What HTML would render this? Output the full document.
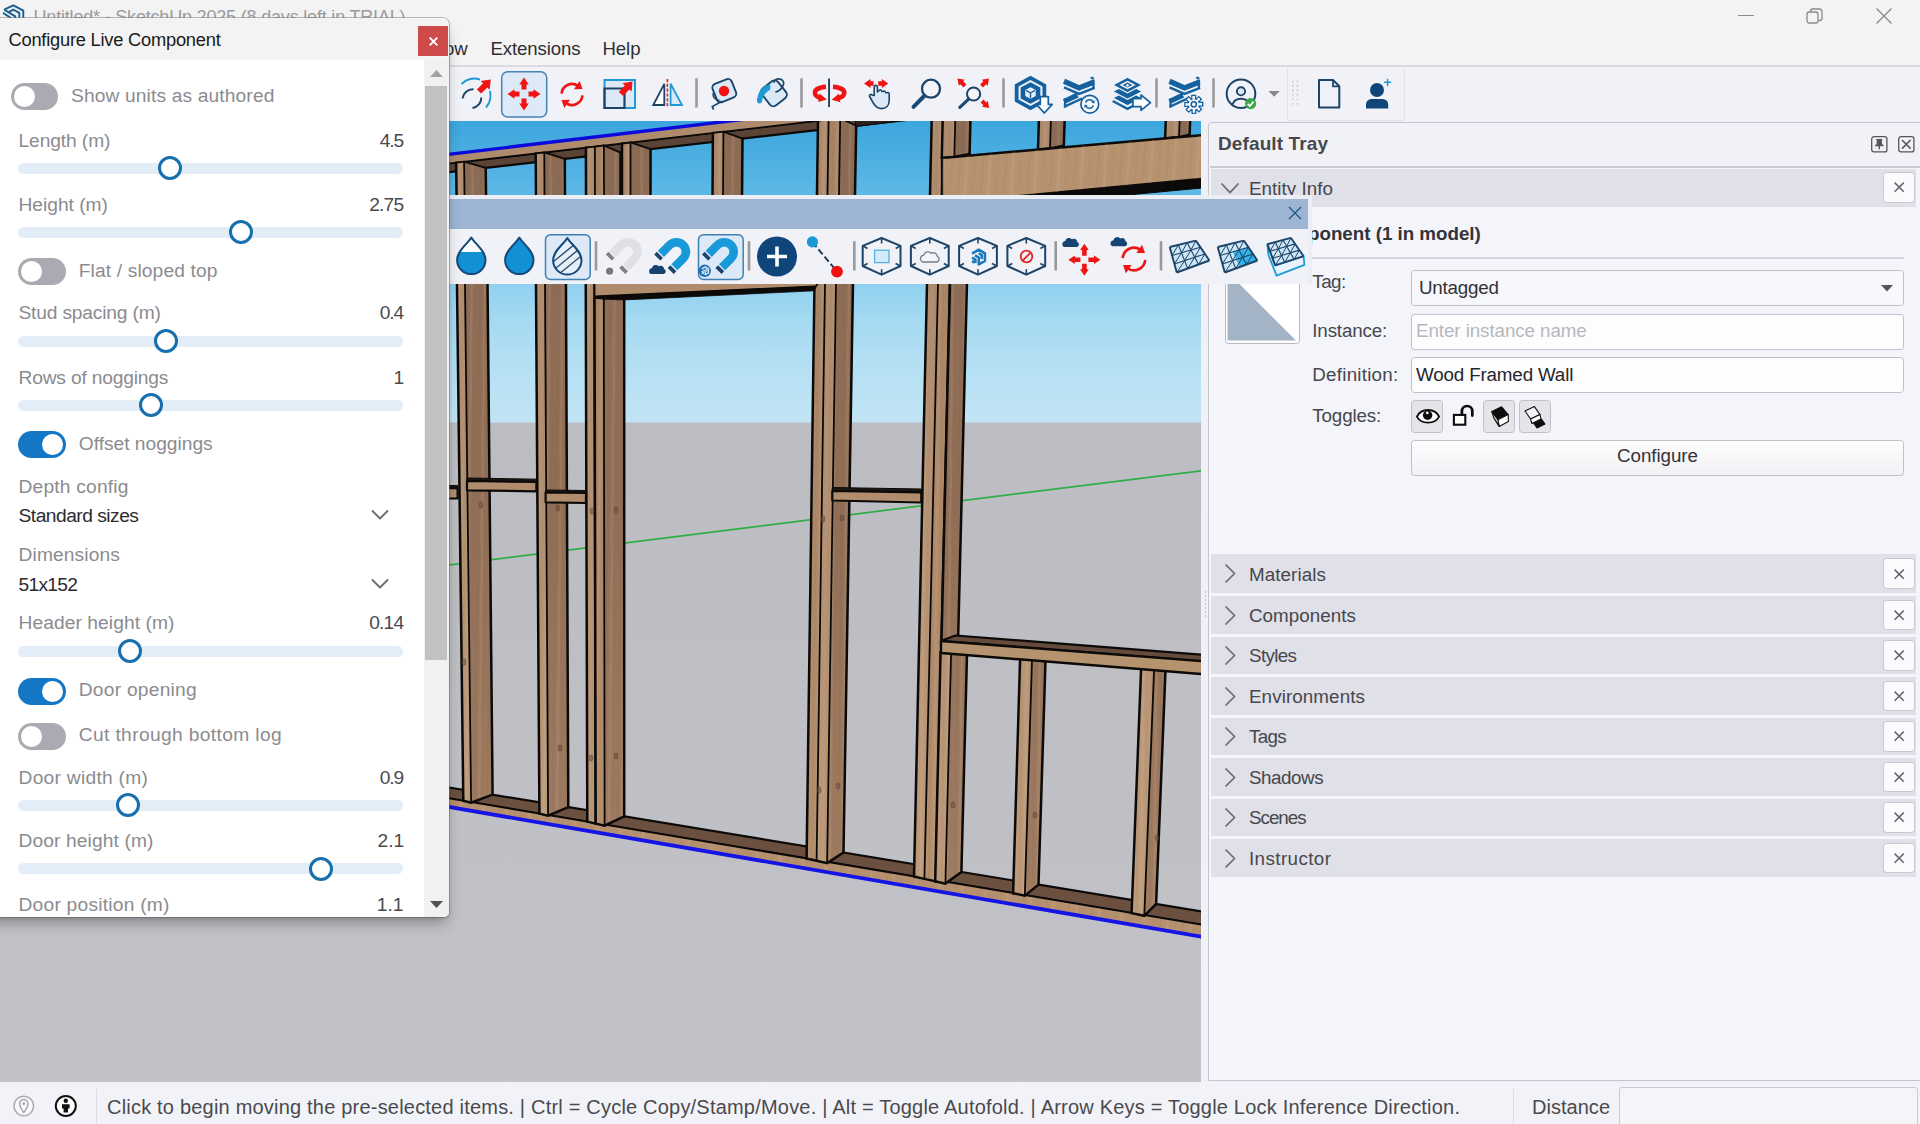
<!DOCTYPE html>
<html><head><meta charset="utf-8"><title>SketchUp</title><style>
html,body{margin:0;padding:0;}
body{width:1920px;height:1124px;overflow:hidden;position:relative;background:#f1f2f7;font-family:"Liberation Sans",sans-serif;}
.t{position:absolute;white-space:pre;font-family:"Liberation Sans",sans-serif;}
#root{position:absolute;left:0;top:0;width:1920px;height:1124px;overflow:hidden;background:#f1f2f7;}
html{overflow:hidden;}
.a{position:absolute;}
svg{position:absolute;overflow:visible;}
</style></head><body>
<div id="root">
<div class="a" style="left:0;top:0;width:1920px;height:66px;background:#f3f3f4"></div>
<svg style="left:0px;top:0px" width="28" height="28" viewBox="0 0 28 28" fill="none" stroke="#1c5f8f" stroke-width="1.9" stroke-linejoin="miter">
      <path d="M4.2 9.6 L13.4 5.4 L23.3 10.6 V19"/>
      <path d="M4.2 9.6 L15.2 16.4 V19"/>
      <path d="M8.6 12.2 L13.3 9.6 L19.3 12.8 V19"/>
      <path d="M3 12.9 L11.4 18.2"/>
    </svg>
<span class="t" style="left:33.50px;top:8.36px;font-size:18px;line-height:18px;color:#9b9b9b;letter-spacing:-0.188px;">Untitled* - SketchUp 2025 (8 days left in TRIAL)</span>
<div class="a" style="left:1738px;top:15px;width:16px;height:1.4px;background:#8a8a8a"></div>
<svg style="left:1806px;top:8px" width="17" height="17" viewBox="0 0 17 17" fill="none" stroke="#8a8a8a" stroke-width="1.3">
      <rect x="1" y="4" width="11" height="11" rx="2.2"/><path d="M4.5 4 V3.2 A2.2 2.2 0 0 1 6.7 1 H13 A3 3 0 0 1 16 4 V10.3 A2.2 2.2 0 0 1 13.8 12.5 H12.2"/></svg>
<svg style="left:1876px;top:8px" width="16" height="16" viewBox="0 0 16 16" fill="none" stroke="#8a8a8a" stroke-width="1.4"><path d="M0.5 0.5 L15.5 15.5 M15.5 0.5 L0.5 15.5"/></svg>

<span class="t" style="left:444.02px;top:39.86px;font-size:18.6px;line-height:18.6px;color:#2f2f33;letter-spacing:0.000px;">ow</span>
<span class="t" style="left:490.50px;top:39.86px;font-size:18.6px;line-height:18.6px;color:#2f2f33;letter-spacing:-0.110px;">Extensions</span>
<span class="t" style="left:602.50px;top:39.86px;font-size:18.6px;line-height:18.6px;color:#2f2f33;letter-spacing:-0.085px;">Help</span>
<div class="a" style="left:0;top:65px;width:1920px;height:1.5px;background:#d9dae2"></div>
<div class="a" style="left:0;top:67px;width:1920px;height:54px;background:#f1f2f7"></div>
<div class="a" style="left:1287px;top:67px;width:1px;height:53px;background:#e2e3ea"></div>
<div class="a" style="left:1404px;top:67px;width:1px;height:53px;background:#e2e3ea"></div>
<div class="a" style="left:1288px;top:120px;width:117px;height:1px;background:#e2e3ea"></div>
<div class="a" style="left:1201px;top:121px;width:719px;height:961px;background:#eff1f7"></div>
<svg style="left:0;top:121px" width="1201" height="961" viewBox="0 121 1201 961">
<defs>
    <linearGradient id="sky" x1="0" y1="121" x2="0" y2="423" gradientUnits="userSpaceOnUse">
      <stop offset="0" stop-color="#3ca6dd"/><stop offset="0.25" stop-color="#5fb9e6"/><stop offset="0.54" stop-color="#90d0ef"/><stop offset="0.65" stop-color="#a3d9f1"/><stop offset="0.76" stop-color="#b0def3"/><stop offset="0.88" stop-color="#bae2f4"/><stop offset="1" stop-color="#c1e4f4"/>
    </linearGradient>
    <linearGradient id="gnd" x1="0" y1="422" x2="0" y2="1082" gradientUnits="userSpaceOnUse">
      <stop offset="0" stop-color="#bcbdc2"/><stop offset="1" stop-color="#c2c3c8"/>
    </linearGradient>
    <pattern id="grainV" width="13" height="90" patternUnits="userSpaceOnUse" patternTransform="rotate(0.6)">
      <path d="M2 0 V90" stroke="#6f5038" stroke-opacity="0.10" stroke-width="1.6"/>
      <path d="M6.5 0 C7.5 30 5.5 60 6.5 90" fill="none" stroke="#e2c4a3" stroke-opacity="0.16" stroke-width="2"/>
      <path d="M10.5 0 V90" stroke="#6f5038" stroke-opacity="0.07" stroke-width="1"/>
    </pattern>
    <pattern id="grainH" width="23" height="60" patternUnits="userSpaceOnUse" patternTransform="rotate(4)">
      <path d="M3 0 V60" stroke="#8a6a4e" stroke-opacity="0.10" stroke-width="2"/>
      <path d="M10 0 V60" stroke="#dcbc9a" stroke-opacity="0.16" stroke-width="3"/>
      <path d="M17.5 0 V60" stroke="#8a6a4e" stroke-opacity="0.07" stroke-width="1.5"/>
    </pattern>
    <linearGradient id="gF1" x1="0" y1="121" x2="0" y2="940" gradientUnits="userSpaceOnUse"><stop offset="0" stop-color="#ae8b6d"/><stop offset="0.5" stop-color="#b59273"/><stop offset="1" stop-color="#bf9c7c"/></linearGradient>
    <linearGradient id="gF2" x1="0" y1="121" x2="0" y2="940" gradientUnits="userSpaceOnUse"><stop offset="0" stop-color="#a88465"/><stop offset="0.5" stop-color="#ad8969"/><stop offset="1" stop-color="#b7926f"/></linearGradient>
    <linearGradient id="gSD" x1="0" y1="121" x2="0" y2="940" gradientUnits="userSpaceOnUse"><stop offset="0" stop-color="#8c6b55"/><stop offset="0.45" stop-color="#906e56"/><stop offset="0.8" stop-color="#9c795e"/><stop offset="1" stop-color="#a17e62"/></linearGradient>
    <clipPath id="vpclip"><rect x="0" y="121" width="1201" height="961"/></clipPath>
    </defs>
<g clip-path="url(#vpclip)">
<rect x="0" y="121" width="1201" height="302" fill="url(#sky)"/>
<rect x="0" y="422.5" width="1201" height="660" fill="url(#gnd)"/>
<polyline points="0.0,621.2 1201.0,470.8" fill="none" stroke="#2fae48" stroke-width="1.7" stroke-linecap="round" />
<polygon points="440.0,164.5 1000.0,99.6 1000.0,109.3 440.0,173.1" fill="#5b4436" stroke="#0b0a09" stroke-width="2.2" stroke-linejoin="round" />
<polygon points="440.0,155.1 900.0,100.5 900.0,111.2 440.0,164.5" fill="url(#gF1)" stroke="none" stroke-width="0" stroke-linejoin="round" />
<polyline points="440.0,164.5 900.0,111.2" fill="none" stroke="#0b0a09" stroke-width="1.6" stroke-linecap="round" />
<polyline points="440.0,155.4 900.0,100.8" fill="none" stroke="#0a0adc" stroke-width="3.4" stroke-linecap="round" />
<polygon points="440.0,786.0 1210.0,912.9 1210.0,926.2 440.0,796.9" fill="#6b5040" stroke="#0b0a09" stroke-width="2.2" stroke-linejoin="round" />
<polygon points="440.0,796.9 1210.0,926.2 1210.0,938.2 440.0,805.4" fill="#b5906f" stroke="none" stroke-width="0" stroke-linejoin="round" />
<polygon points="440.0,796.9 1210.0,926.2 1210.0,938.2 440.0,805.4" fill="url(#grainH)" stroke="none" stroke-width="0" stroke-linejoin="round" />
<polyline points="440.0,796.9 1210.0,926.2" fill="none" stroke="#0b0a09" stroke-width="1.8" stroke-linecap="round" />
<polyline points="440.0,805.4 1210.0,938.2" fill="none" stroke="#1414e6" stroke-width="3.8" stroke-linecap="round" />
<polygon points="456.1,162.7 464.1,161.7 464.6,200.0 456.6,200.0" fill="url(#gF1)" stroke="none" stroke-width="0" stroke-linejoin="round" />
<polygon points="456.1,162.7 464.1,161.7 464.6,200.0 456.6,200.0" fill="url(#grainV)" stroke="none" stroke-width="0" stroke-linejoin="round" />
<polygon points="464.1,161.7 485.7,167.9 486.1,200.0 464.6,200.0" fill="url(#gSD)" stroke="none" stroke-width="0" stroke-linejoin="round" />
<polygon points="464.1,161.7 485.7,167.9 486.1,200.0 464.6,200.0" fill="url(#grainV)" stroke="none" stroke-width="0" stroke-linejoin="round" />
<polyline points="464.1,161.7 464.6,200.0" fill="none" stroke="#0b0a09" stroke-width="1.8" stroke-linecap="round" />
<polyline points="456.1,162.7 456.6,200.0" fill="none" stroke="#0b0a09" stroke-width="2.5" stroke-linecap="round" />
<polyline points="485.7,167.9 486.1,200.0" fill="none" stroke="#0b0a09" stroke-width="2.5" stroke-linecap="round" />
<polyline points="456.6,200.0 464.6,200.0 486.1,200.0" fill="none" stroke="#0b0a09" stroke-width="2.5" stroke-linecap="round" />
<polyline points="456.1,162.7 464.1,161.7 485.7,167.9" fill="none" stroke="#0b0a09" stroke-width="1.8" stroke-linecap="round" />
<polygon points="535.7,153.4 544.3,152.5 544.5,200.0 536.0,200.0" fill="url(#gF1)" stroke="none" stroke-width="0" stroke-linejoin="round" />
<polygon points="535.7,153.4 544.3,152.5 544.5,200.0 536.0,200.0" fill="url(#grainV)" stroke="none" stroke-width="0" stroke-linejoin="round" />
<polygon points="544.3,152.5 564.8,158.9 565.0,200.0 544.5,200.0" fill="url(#gSD)" stroke="none" stroke-width="0" stroke-linejoin="round" />
<polygon points="544.3,152.5 564.8,158.9 565.0,200.0 544.5,200.0" fill="url(#grainV)" stroke="none" stroke-width="0" stroke-linejoin="round" />
<polyline points="544.3,152.5 544.5,200.0" fill="none" stroke="#0b0a09" stroke-width="1.8" stroke-linecap="round" />
<polyline points="535.7,153.4 536.0,200.0" fill="none" stroke="#0b0a09" stroke-width="2.5" stroke-linecap="round" />
<polyline points="564.8,158.9 565.0,200.0" fill="none" stroke="#0b0a09" stroke-width="2.5" stroke-linecap="round" />
<polyline points="536.0,200.0 544.5,200.0 565.0,200.0" fill="none" stroke="#0b0a09" stroke-width="2.5" stroke-linecap="round" />
<polyline points="535.7,153.4 544.3,152.5 564.8,158.9" fill="none" stroke="#0b0a09" stroke-width="1.8" stroke-linecap="round" />
<polygon points="585.9,147.6 594.9,146.6 595.0,200.0 586.0,200.0" fill="url(#gF1)" stroke="none" stroke-width="0" stroke-linejoin="round" />
<polygon points="585.9,147.6 594.9,146.6 595.0,200.0 586.0,200.0" fill="url(#grainV)" stroke="none" stroke-width="0" stroke-linejoin="round" />
<polygon points="594.9,146.6 603.9,145.5 604.0,200.0 595.0,200.0" fill="url(#gF2)" stroke="none" stroke-width="0" stroke-linejoin="round" />
<polygon points="594.9,146.6 603.9,145.5 604.0,200.0 595.0,200.0" fill="url(#grainV)" stroke="none" stroke-width="0" stroke-linejoin="round" />
<polygon points="603.9,145.5 620.5,152.6 620.5,200.0 604.0,200.0" fill="url(#gSD)" stroke="none" stroke-width="0" stroke-linejoin="round" />
<polygon points="603.9,145.5 620.5,152.6 620.5,200.0 604.0,200.0" fill="url(#grainV)" stroke="none" stroke-width="0" stroke-linejoin="round" />
<polyline points="594.9,146.6 595.0,200.0" fill="none" stroke="#0b0a09" stroke-width="1.8" stroke-linecap="round" />
<polyline points="603.9,145.5 604.0,200.0" fill="none" stroke="#0b0a09" stroke-width="1.8" stroke-linecap="round" />
<polyline points="585.9,147.6 586.0,200.0" fill="none" stroke="#0b0a09" stroke-width="2.5" stroke-linecap="round" />
<polyline points="620.5,152.6 620.5,200.0" fill="none" stroke="#0b0a09" stroke-width="2.5" stroke-linecap="round" />
<polyline points="586.0,200.0 595.0,200.0 604.0,200.0 620.5,200.0" fill="none" stroke="#0b0a09" stroke-width="2.5" stroke-linecap="round" />
<polyline points="585.9,147.6 594.9,146.6 603.9,145.5 620.5,152.6" fill="none" stroke="#0b0a09" stroke-width="1.8" stroke-linecap="round" />
<polygon points="622.0,143.5 630.5,142.5 630.5,200.0 622.0,200.0" fill="url(#gF1)" stroke="none" stroke-width="0" stroke-linejoin="round" />
<polygon points="622.0,143.5 630.5,142.5 630.5,200.0 622.0,200.0" fill="url(#grainV)" stroke="none" stroke-width="0" stroke-linejoin="round" />
<polygon points="630.5,142.5 650.6,149.1 650.5,200.0 630.5,200.0" fill="url(#gSD)" stroke="none" stroke-width="0" stroke-linejoin="round" />
<polygon points="630.5,142.5 650.6,149.1 650.5,200.0 630.5,200.0" fill="url(#grainV)" stroke="none" stroke-width="0" stroke-linejoin="round" />
<polyline points="630.5,142.5 630.5,200.0" fill="none" stroke="#0b0a09" stroke-width="1.8" stroke-linecap="round" />
<polyline points="622.0,143.5 622.0,200.0" fill="none" stroke="#0b0a09" stroke-width="2.5" stroke-linecap="round" />
<polyline points="650.6,149.1 650.5,200.0" fill="none" stroke="#0b0a09" stroke-width="2.5" stroke-linecap="round" />
<polyline points="622.0,200.0 630.5,200.0 650.5,200.0" fill="none" stroke="#0b0a09" stroke-width="2.5" stroke-linecap="round" />
<polyline points="622.0,143.5 630.5,142.5 650.6,149.1" fill="none" stroke="#0b0a09" stroke-width="1.8" stroke-linecap="round" />
<polygon points="712.9,132.9 723.4,131.7 723.0,200.0 712.5,200.0" fill="url(#gF1)" stroke="none" stroke-width="0" stroke-linejoin="round" />
<polygon points="712.9,132.9 723.4,131.7 723.0,200.0 712.5,200.0" fill="url(#grainV)" stroke="none" stroke-width="0" stroke-linejoin="round" />
<polygon points="723.4,131.7 742.5,138.7 742.0,200.0 723.0,200.0" fill="url(#gSD)" stroke="none" stroke-width="0" stroke-linejoin="round" />
<polygon points="723.4,131.7 742.5,138.7 742.0,200.0 723.0,200.0" fill="url(#grainV)" stroke="none" stroke-width="0" stroke-linejoin="round" />
<polyline points="723.4,131.7 723.0,200.0" fill="none" stroke="#0b0a09" stroke-width="1.8" stroke-linecap="round" />
<polyline points="712.9,132.9 712.5,200.0" fill="none" stroke="#0b0a09" stroke-width="2.5" stroke-linecap="round" />
<polyline points="742.5,138.7 742.0,200.0" fill="none" stroke="#0b0a09" stroke-width="2.5" stroke-linecap="round" />
<polyline points="712.5,200.0 723.0,200.0 742.0,200.0" fill="none" stroke="#0b0a09" stroke-width="2.5" stroke-linecap="round" />
<polyline points="712.9,132.9 723.4,131.7 742.5,138.7" fill="none" stroke="#0b0a09" stroke-width="1.8" stroke-linecap="round" />
<polygon points="818.0,120.7 828.6,119.5 827.4,200.0 816.9,200.0" fill="url(#gF1)" stroke="none" stroke-width="0" stroke-linejoin="round" />
<polygon points="818.0,120.7 828.6,119.5 827.4,200.0 816.9,200.0" fill="url(#grainV)" stroke="none" stroke-width="0" stroke-linejoin="round" />
<polygon points="828.6,119.5 840.2,118.2 838.9,200.0 827.4,200.0" fill="url(#gF2)" stroke="none" stroke-width="0" stroke-linejoin="round" />
<polygon points="828.6,119.5 840.2,118.2 838.9,200.0 827.4,200.0" fill="url(#grainV)" stroke="none" stroke-width="0" stroke-linejoin="round" />
<polygon points="840.2,118.2 856.2,125.7 854.9,200.0 838.9,200.0" fill="url(#gSD)" stroke="none" stroke-width="0" stroke-linejoin="round" />
<polygon points="840.2,118.2 856.2,125.7 854.9,200.0 838.9,200.0" fill="url(#grainV)" stroke="none" stroke-width="0" stroke-linejoin="round" />
<polyline points="828.6,119.5 827.4,200.0" fill="none" stroke="#0b0a09" stroke-width="1.8" stroke-linecap="round" />
<polyline points="840.2,118.2 838.9,200.0" fill="none" stroke="#0b0a09" stroke-width="1.8" stroke-linecap="round" />
<polyline points="818.0,120.7 816.9,200.0" fill="none" stroke="#0b0a09" stroke-width="2.5" stroke-linecap="round" />
<polyline points="856.2,125.7 854.9,200.0" fill="none" stroke="#0b0a09" stroke-width="2.5" stroke-linecap="round" />
<polyline points="816.9,200.0 827.4,200.0 838.9,200.0 854.9,200.0" fill="none" stroke="#0b0a09" stroke-width="2.5" stroke-linecap="round" />
<polyline points="818.0,120.7 828.6,119.5 840.2,118.2 856.2,125.7" fill="none" stroke="#0b0a09" stroke-width="1.8" stroke-linecap="round" />
<polygon points="931.9,110.0 944.0,110.0 941.9,200.0 929.9,200.0" fill="url(#gF1)" stroke="none" stroke-width="0" stroke-linejoin="round" />
<polygon points="931.9,110.0 944.0,110.0 941.9,200.0 929.9,200.0" fill="url(#grainV)" stroke="none" stroke-width="0" stroke-linejoin="round" />
<polyline points="931.9,110.0 929.9,200.0" fill="none" stroke="#0b0a09" stroke-width="2.5" stroke-linecap="round" />
<polyline points="944.0,110.0 941.9,200.0" fill="none" stroke="#0b0a09" stroke-width="2.5" stroke-linecap="round" />
<polyline points="929.9,200.0 941.9,200.0" fill="none" stroke="#0b0a09" stroke-width="2.5" stroke-linecap="round" />
<polyline points="931.9,110.0 944.0,110.0" fill="none" stroke="#0b0a09" stroke-width="1.8" stroke-linecap="round" />
<polygon points="942.9,110.0 955.5,110.0 954.3,156.9 941.8,158.0" fill="url(#gF1)" stroke="none" stroke-width="0" stroke-linejoin="round" />
<polygon points="942.9,110.0 955.5,110.0 954.3,156.9 941.8,158.0" fill="url(#grainV)" stroke="none" stroke-width="0" stroke-linejoin="round" />
<polygon points="955.5,110.0 970.7,110.0 969.6,154.1 954.3,156.9" fill="url(#gSD)" stroke="none" stroke-width="0" stroke-linejoin="round" />
<polygon points="955.5,110.0 970.7,110.0 969.6,154.1 954.3,156.9" fill="url(#grainV)" stroke="none" stroke-width="0" stroke-linejoin="round" />
<polyline points="955.5,110.0 954.3,156.9" fill="none" stroke="#0b0a09" stroke-width="1.8" stroke-linecap="round" />
<polyline points="942.9,110.0 941.8,158.0" fill="none" stroke="#0b0a09" stroke-width="2.5" stroke-linecap="round" />
<polyline points="970.7,110.0 969.6,154.1" fill="none" stroke="#0b0a09" stroke-width="2.5" stroke-linecap="round" />
<polyline points="941.8,158.0 954.3,156.9 969.6,154.1" fill="none" stroke="#0b0a09" stroke-width="2.5" stroke-linecap="round" />
<polyline points="942.9,110.0 955.5,110.0 970.7,110.0" fill="none" stroke="#0b0a09" stroke-width="1.8" stroke-linecap="round" />
<polygon points="1039.2,110.0 1051.2,110.0 1050.0,148.5 1038.0,149.6" fill="url(#gF1)" stroke="none" stroke-width="0" stroke-linejoin="round" />
<polygon points="1039.2,110.0 1051.2,110.0 1050.0,148.5 1038.0,149.6" fill="url(#grainV)" stroke="none" stroke-width="0" stroke-linejoin="round" />
<polygon points="1051.2,110.0 1065.0,110.0 1063.8,145.8 1050.0,148.5" fill="url(#gSD)" stroke="none" stroke-width="0" stroke-linejoin="round" />
<polygon points="1051.2,110.0 1065.0,110.0 1063.8,145.8 1050.0,148.5" fill="url(#grainV)" stroke="none" stroke-width="0" stroke-linejoin="round" />
<polyline points="1051.2,110.0 1050.0,148.5" fill="none" stroke="#0b0a09" stroke-width="1.8" stroke-linecap="round" />
<polyline points="1039.2,110.0 1038.0,149.6" fill="none" stroke="#0b0a09" stroke-width="2.5" stroke-linecap="round" />
<polyline points="1065.0,110.0 1063.8,145.8" fill="none" stroke="#0b0a09" stroke-width="2.5" stroke-linecap="round" />
<polyline points="1038.0,149.6 1050.0,148.5 1063.8,145.8" fill="none" stroke="#0b0a09" stroke-width="2.5" stroke-linecap="round" />
<polyline points="1039.2,110.0 1051.2,110.0 1065.0,110.0" fill="none" stroke="#0b0a09" stroke-width="1.8" stroke-linecap="round" />
<polygon points="1166.2,110.0 1180.1,110.0 1179.0,137.1 1165.1,138.4" fill="url(#gF1)" stroke="none" stroke-width="0" stroke-linejoin="round" />
<polygon points="1166.2,110.0 1180.1,110.0 1179.0,137.1 1165.1,138.4" fill="url(#grainV)" stroke="none" stroke-width="0" stroke-linejoin="round" />
<polygon points="1180.1,110.0 1190.6,110.0 1189.6,134.7 1179.0,137.1" fill="url(#gSD)" stroke="none" stroke-width="0" stroke-linejoin="round" />
<polygon points="1180.1,110.0 1190.6,110.0 1189.6,134.7 1179.0,137.1" fill="url(#grainV)" stroke="none" stroke-width="0" stroke-linejoin="round" />
<polyline points="1180.1,110.0 1179.0,137.1" fill="none" stroke="#0b0a09" stroke-width="1.8" stroke-linecap="round" />
<polyline points="1166.2,110.0 1165.1,138.4" fill="none" stroke="#0b0a09" stroke-width="2.5" stroke-linecap="round" />
<polyline points="1190.6,110.0 1189.6,134.7" fill="none" stroke="#0b0a09" stroke-width="2.5" stroke-linecap="round" />
<polyline points="1165.1,138.4 1179.0,137.1 1189.6,134.7" fill="none" stroke="#0b0a09" stroke-width="2.5" stroke-linecap="round" />
<polyline points="1166.2,110.0 1180.1,110.0 1190.6,110.0" fill="none" stroke="#0b0a09" stroke-width="1.8" stroke-linecap="round" />
<polygon points="942.0,158.0 1210.0,134.4 1210.0,178.0 994.0,198.5 942.0,200.0" fill="#b6926f" stroke="#0b0a09" stroke-width="2.4" stroke-linejoin="round" />
<polygon points="942.0,158.0 1210.0,134.4 1210.0,178.0 994.0,198.5 942.0,200.0" fill="url(#grainH)" stroke="none" stroke-width="0" stroke-linejoin="round" />
<polygon points="1210.0,178.2 1210.0,187.2 1117.0,196.0 1010.0,197.0" fill="#0b0a09" stroke="#0b0a09" stroke-width="1" stroke-linejoin="round" />
<polygon points="855.0,120.0 906.0,120.0 856.0,126.5" fill="#2a1f19" stroke="#0b0a09" stroke-width="1.2" stroke-linejoin="round" />
<polygon points="456.8,270.0 464.8,270.0 471.1,802.7 463.3,800.8" fill="url(#gF1)" stroke="none" stroke-width="0" stroke-linejoin="round" />
<polygon points="456.8,270.0 464.8,270.0 471.1,802.7 463.3,800.8" fill="url(#grainV)" stroke="none" stroke-width="0" stroke-linejoin="round" />
<polygon points="464.8,270.0 487.4,270.0 492.6,794.7 471.1,802.7" fill="url(#gSD)" stroke="none" stroke-width="0" stroke-linejoin="round" />
<polygon points="464.8,270.0 487.4,270.0 492.6,794.7 471.1,802.7" fill="url(#grainV)" stroke="none" stroke-width="0" stroke-linejoin="round" />
<polyline points="464.8,270.0 471.1,802.7" fill="none" stroke="#0b0a09" stroke-width="1.8" stroke-linecap="round" />
<polyline points="456.8,270.0 463.3,800.8" fill="none" stroke="#0b0a09" stroke-width="2.5" stroke-linecap="round" />
<polyline points="487.4,270.0 492.6,794.7" fill="none" stroke="#0b0a09" stroke-width="2.5" stroke-linecap="round" />
<polyline points="463.3,800.8 471.1,802.7 492.6,794.7" fill="none" stroke="#0b0a09" stroke-width="2.5" stroke-linecap="round" />
<polyline points="456.8,270.0 464.8,270.0 487.4,270.0" fill="none" stroke="#0b0a09" stroke-width="1.8" stroke-linecap="round" />
<polygon points="535.9,270.0 544.9,270.0 548.1,815.6 539.4,813.6" fill="url(#gF1)" stroke="none" stroke-width="0" stroke-linejoin="round" />
<polygon points="535.9,270.0 544.9,270.0 548.1,815.6 539.4,813.6" fill="url(#grainV)" stroke="none" stroke-width="0" stroke-linejoin="round" />
<polygon points="544.9,270.0 565.9,270.0 568.3,807.2 548.1,815.6" fill="url(#gSD)" stroke="none" stroke-width="0" stroke-linejoin="round" />
<polygon points="544.9,270.0 565.9,270.0 568.3,807.2 548.1,815.6" fill="url(#grainV)" stroke="none" stroke-width="0" stroke-linejoin="round" />
<polyline points="544.9,270.0 548.1,815.6" fill="none" stroke="#0b0a09" stroke-width="1.8" stroke-linecap="round" />
<polyline points="535.9,270.0 539.4,813.6" fill="none" stroke="#0b0a09" stroke-width="2.5" stroke-linecap="round" />
<polyline points="565.9,270.0 568.3,807.2" fill="none" stroke="#0b0a09" stroke-width="2.5" stroke-linecap="round" />
<polyline points="539.4,813.6 548.1,815.6 568.3,807.2" fill="none" stroke="#0b0a09" stroke-width="2.5" stroke-linecap="round" />
<polyline points="535.9,270.0 544.9,270.0 565.9,270.0" fill="none" stroke="#0b0a09" stroke-width="1.8" stroke-linecap="round" />
<polygon points="585.7,270.0 594.5,270.0 595.7,823.6 587.3,821.6" fill="url(#gF1)" stroke="none" stroke-width="0" stroke-linejoin="round" />
<polygon points="585.7,270.0 594.5,270.0 595.7,823.6 587.3,821.6" fill="url(#grainV)" stroke="none" stroke-width="0" stroke-linejoin="round" />
<polyline points="585.7,270.0 587.3,821.6" fill="none" stroke="#0b0a09" stroke-width="2.5" stroke-linecap="round" />
<polyline points="594.5,270.0 595.7,823.6" fill="none" stroke="#0b0a09" stroke-width="2.5" stroke-linecap="round" />
<polyline points="587.3,821.6 595.7,823.6" fill="none" stroke="#0b0a09" stroke-width="2.5" stroke-linecap="round" />
<polyline points="585.7,270.0 594.5,270.0" fill="none" stroke="#0b0a09" stroke-width="1.8" stroke-linecap="round" />
<polygon points="594.5,298.2 603.8,298.2 604.6,825.7 595.7,823.6" fill="url(#gF2)" stroke="none" stroke-width="0" stroke-linejoin="round" />
<polygon points="594.5,298.2 603.8,298.2 604.6,825.7 595.7,823.6" fill="url(#grainV)" stroke="none" stroke-width="0" stroke-linejoin="round" />
<polygon points="603.8,298.2 624.2,298.2 624.2,816.4 604.6,825.7" fill="url(#gSD)" stroke="none" stroke-width="0" stroke-linejoin="round" />
<polygon points="603.8,298.2 624.2,298.2 624.2,816.4 604.6,825.7" fill="url(#grainV)" stroke="none" stroke-width="0" stroke-linejoin="round" />
<polyline points="603.8,298.2 604.6,825.7" fill="none" stroke="#0b0a09" stroke-width="1.8" stroke-linecap="round" />
<polyline points="594.5,298.2 595.7,823.6" fill="none" stroke="#0b0a09" stroke-width="2.5" stroke-linecap="round" />
<polyline points="624.2,298.2 624.2,816.4" fill="none" stroke="#0b0a09" stroke-width="2.5" stroke-linecap="round" />
<polyline points="595.7,823.6 604.6,825.7 624.2,816.4" fill="none" stroke="#0b0a09" stroke-width="2.5" stroke-linecap="round" />
<polyline points="594.5,298.2 603.8,298.2 624.2,298.2" fill="none" stroke="#0b0a09" stroke-width="1.8" stroke-linecap="round" />
<polygon points="594.5,270.0 826.0,270.0 826.0,286.0 594.5,296.3" fill="#b08c6c" stroke="#0b0a09" stroke-width="1.8" stroke-linejoin="round" />
<polygon points="596.5,296.6 814.5,286.6 814.5,290.8 624.5,299.9 604.0,299.2 596.5,298.4" fill="#0b0a09" stroke="#0b0a09" stroke-width="0.8" stroke-linejoin="round" />
<polygon points="814.4,289.0 825.2,270.0 816.6,860.8 806.6,858.5" fill="url(#gF2)" stroke="none" stroke-width="0" stroke-linejoin="round" />
<polygon points="814.4,289.0 825.2,270.0 816.6,860.8 806.6,858.5" fill="url(#grainV)" stroke="none" stroke-width="0" stroke-linejoin="round" />
<polygon points="825.2,270.0 836.2,270.0 827.1,863.1 816.6,860.8" fill="url(#gF1)" stroke="none" stroke-width="0" stroke-linejoin="round" />
<polygon points="825.2,270.0 836.2,270.0 827.1,863.1 816.6,860.8" fill="url(#grainV)" stroke="none" stroke-width="0" stroke-linejoin="round" />
<polygon points="836.2,270.0 853.2,270.0 843.5,852.5 827.1,863.1" fill="url(#gSD)" stroke="none" stroke-width="0" stroke-linejoin="round" />
<polygon points="836.2,270.0 853.2,270.0 843.5,852.5 827.1,863.1" fill="url(#grainV)" stroke="none" stroke-width="0" stroke-linejoin="round" />
<polyline points="825.2,270.0 816.6,860.8" fill="none" stroke="#0b0a09" stroke-width="1.8" stroke-linecap="round" />
<polyline points="836.2,270.0 827.1,863.1" fill="none" stroke="#0b0a09" stroke-width="1.8" stroke-linecap="round" />
<polyline points="814.4,289.0 806.6,858.5" fill="none" stroke="#0b0a09" stroke-width="2.5" stroke-linecap="round" />
<polyline points="853.2,270.0 843.5,852.5" fill="none" stroke="#0b0a09" stroke-width="2.5" stroke-linecap="round" />
<polyline points="806.6,858.5 816.6,860.8 827.1,863.1 843.5,852.5" fill="none" stroke="#0b0a09" stroke-width="2.5" stroke-linecap="round" />
<polyline points="814.4,289.0 825.2,270.0 836.2,270.0 853.2,270.0" fill="none" stroke="#0b0a09" stroke-width="1.8" stroke-linecap="round" />
<polygon points="927.3,270.0 938.3,270.0 924.4,878.9 914.0,876.5" fill="url(#gF1)" stroke="none" stroke-width="0" stroke-linejoin="round" />
<polygon points="927.3,270.0 938.3,270.0 924.4,878.9 914.0,876.5" fill="url(#grainV)" stroke="none" stroke-width="0" stroke-linejoin="round" />
<polygon points="938.3,270.0 950.3,270.0 935.8,881.4 924.4,878.9" fill="url(#gF2)" stroke="none" stroke-width="0" stroke-linejoin="round" />
<polygon points="938.3,270.0 950.3,270.0 935.8,881.4 924.4,878.9" fill="url(#grainV)" stroke="none" stroke-width="0" stroke-linejoin="round" />
<polyline points="938.3,270.0 924.4,878.9" fill="none" stroke="#0b0a09" stroke-width="1.8" stroke-linecap="round" />
<polyline points="927.3,270.0 914.0,876.5" fill="none" stroke="#0b0a09" stroke-width="2.5" stroke-linecap="round" />
<polyline points="950.3,270.0 935.8,881.4" fill="none" stroke="#0b0a09" stroke-width="2.5" stroke-linecap="round" />
<polyline points="914.0,876.5 924.4,878.9 935.8,881.4" fill="none" stroke="#0b0a09" stroke-width="2.5" stroke-linecap="round" />
<polyline points="927.3,270.0 938.3,270.0 950.3,270.0" fill="none" stroke="#0b0a09" stroke-width="1.8" stroke-linecap="round" />
<polygon points="950.3,270.0 967.3,270.0 958.2,636.0 941.5,641.0" fill="url(#gSD)" stroke="none" stroke-width="0" stroke-linejoin="round" />
<polygon points="950.3,270.0 967.3,270.0 958.2,636.0 941.5,641.0" fill="url(#grainV)" stroke="none" stroke-width="0" stroke-linejoin="round" />
<polyline points="950.3,270.0 941.5,641.0" fill="none" stroke="#0b0a09" stroke-width="2.5" stroke-linecap="round" />
<polyline points="967.3,270.0 958.2,636.0" fill="none" stroke="#0b0a09" stroke-width="2.5" stroke-linecap="round" />
<polyline points="941.5,641.0 958.2,636.0" fill="none" stroke="#0b0a09" stroke-width="2.5" stroke-linecap="round" />
<polyline points="950.3,270.0 967.3,270.0" fill="none" stroke="#0b0a09" stroke-width="1.8" stroke-linecap="round" />
<polygon points="940.6,652.0 951.1,652.8 945.4,883.6 935.2,881.3" fill="url(#gF1)" stroke="none" stroke-width="0" stroke-linejoin="round" />
<polygon points="940.6,652.0 951.1,652.8 945.4,883.6 935.2,881.3" fill="url(#grainV)" stroke="none" stroke-width="0" stroke-linejoin="round" />
<polygon points="951.1,652.8 967.0,654.1 961.4,871.9 945.4,883.6" fill="url(#gSD)" stroke="none" stroke-width="0" stroke-linejoin="round" />
<polygon points="951.1,652.8 967.0,654.1 961.4,871.9 945.4,883.6" fill="url(#grainV)" stroke="none" stroke-width="0" stroke-linejoin="round" />
<polyline points="951.1,652.8 945.4,883.6" fill="none" stroke="#0b0a09" stroke-width="1.8" stroke-linecap="round" />
<polyline points="940.6,652.0 935.2,881.3" fill="none" stroke="#0b0a09" stroke-width="2.5" stroke-linecap="round" />
<polyline points="967.0,654.1 961.4,871.9" fill="none" stroke="#0b0a09" stroke-width="2.5" stroke-linecap="round" />
<polyline points="935.2,881.3 945.4,883.6 961.4,871.9" fill="none" stroke="#0b0a09" stroke-width="2.5" stroke-linecap="round" />
<polyline points="940.6,652.0 951.1,652.8 967.0,654.1" fill="none" stroke="#0b0a09" stroke-width="1.8" stroke-linecap="round" />
<polygon points="1020.1,658.4 1032.0,659.4 1024.8,895.7 1013.1,893.2" fill="url(#gF1)" stroke="none" stroke-width="0" stroke-linejoin="round" />
<polygon points="1020.1,658.4 1032.0,659.4 1024.8,895.7 1013.1,893.2" fill="url(#grainV)" stroke="none" stroke-width="0" stroke-linejoin="round" />
<polygon points="1032.0,659.4 1045.5,660.5 1038.5,884.6 1024.8,895.7" fill="url(#gSD)" stroke="none" stroke-width="0" stroke-linejoin="round" />
<polygon points="1032.0,659.4 1045.5,660.5 1038.5,884.6 1024.8,895.7" fill="url(#grainV)" stroke="none" stroke-width="0" stroke-linejoin="round" />
<polyline points="1032.0,659.4 1024.8,895.7" fill="none" stroke="#0b0a09" stroke-width="1.8" stroke-linecap="round" />
<polyline points="1020.1,658.4 1013.1,893.2" fill="none" stroke="#0b0a09" stroke-width="2.5" stroke-linecap="round" />
<polyline points="1045.5,660.5 1038.5,884.6" fill="none" stroke="#0b0a09" stroke-width="2.5" stroke-linecap="round" />
<polyline points="1013.1,893.2 1024.8,895.7 1038.5,884.6" fill="none" stroke="#0b0a09" stroke-width="2.5" stroke-linecap="round" />
<polyline points="1020.1,658.4 1032.0,659.4 1045.5,660.5" fill="none" stroke="#0b0a09" stroke-width="1.8" stroke-linecap="round" />
<polygon points="1141.1,668.2 1154.1,669.3 1144.3,915.8 1131.6,913.1" fill="url(#gF1)" stroke="none" stroke-width="0" stroke-linejoin="round" />
<polygon points="1141.1,668.2 1154.1,669.3 1144.3,915.8 1131.6,913.1" fill="url(#grainV)" stroke="none" stroke-width="0" stroke-linejoin="round" />
<polygon points="1154.1,669.3 1165.5,670.2 1156.1,904.0 1144.3,915.8" fill="url(#gSD)" stroke="none" stroke-width="0" stroke-linejoin="round" />
<polygon points="1154.1,669.3 1165.5,670.2 1156.1,904.0 1144.3,915.8" fill="url(#grainV)" stroke="none" stroke-width="0" stroke-linejoin="round" />
<polyline points="1154.1,669.3 1144.3,915.8" fill="none" stroke="#0b0a09" stroke-width="1.8" stroke-linecap="round" />
<polyline points="1141.1,668.2 1131.6,913.1" fill="none" stroke="#0b0a09" stroke-width="2.5" stroke-linecap="round" />
<polyline points="1165.5,670.2 1156.1,904.0" fill="none" stroke="#0b0a09" stroke-width="2.5" stroke-linecap="round" />
<polyline points="1131.6,913.1 1144.3,915.8 1156.1,904.0" fill="none" stroke="#0b0a09" stroke-width="2.5" stroke-linecap="round" />
<polyline points="1141.1,668.2 1154.1,669.3 1165.5,670.2" fill="none" stroke="#0b0a09" stroke-width="1.8" stroke-linecap="round" />
<polygon points="941.0,641.0 955.5,635.5 1210.0,655.3 1210.0,661.8" fill="#654b3c" stroke="#0b0a09" stroke-width="2.2" stroke-linejoin="round" />
<polygon points="941.0,641.0 1210.0,661.8 1210.0,674.8 941.0,653.0" fill="#b6936f" stroke="#0b0a09" stroke-width="2.4" stroke-linejoin="round" />
<polygon points="440.0,485.5 457.6,485.5 457.6,488.2 440.0,488.2" fill="#1d1713" stroke="#0b0a09" stroke-width="1" stroke-linejoin="round" />
<polygon points="440.0,488.2 457.6,488.2 457.6,498.5 440.0,498.5" fill="#b18d6e" stroke="#0b0a09" stroke-width="2.2" stroke-linejoin="round" />
<polygon points="467.0,478.0 536.4,479.2 536.4,482.0 467.0,481.0" fill="#1d1713" stroke="#0b0a09" stroke-width="1" stroke-linejoin="round" />
<polygon points="467.0,481.0 536.4,482.0 536.4,491.3 467.0,490.3" fill="#b18d6e" stroke="#0b0a09" stroke-width="2.2" stroke-linejoin="round" />
<polygon points="545.6,490.0 586.0,490.5 586.0,493.0 545.6,492.5" fill="#1d1713" stroke="#0b0a09" stroke-width="1" stroke-linejoin="round" />
<polygon points="545.6,492.5 586.0,493.0 586.0,503.0 545.6,502.3" fill="#b18d6e" stroke="#0b0a09" stroke-width="2.2" stroke-linejoin="round" />
<polygon points="832.3,487.5 921.3,489.0 921.3,492.3 832.3,491.0" fill="#1d1713" stroke="#0b0a09" stroke-width="1" stroke-linejoin="round" />
<polygon points="832.3,491.0 921.3,492.3 921.3,502.5 832.3,500.5" fill="#b18d6e" stroke="#0b0a09" stroke-width="2.2" stroke-linejoin="round" />
<ellipse cx="481" cy="505" rx="2" ry="3.2" fill="#6a4d3a" fill-opacity="0.55" stroke="#5b4030" stroke-opacity="0.5" stroke-width="0.8"/>
<ellipse cx="558" cy="508" rx="2" ry="3.2" fill="#6a4d3a" fill-opacity="0.55" stroke="#5b4030" stroke-opacity="0.5" stroke-width="0.8"/>
<ellipse cx="592" cy="511" rx="2" ry="3.2" fill="#6a4d3a" fill-opacity="0.55" stroke="#5b4030" stroke-opacity="0.5" stroke-width="0.8"/>
<ellipse cx="616" cy="510" rx="2" ry="3.2" fill="#6a4d3a" fill-opacity="0.55" stroke="#5b4030" stroke-opacity="0.5" stroke-width="0.8"/>
<ellipse cx="823" cy="519" rx="2" ry="3.2" fill="#6a4d3a" fill-opacity="0.55" stroke="#5b4030" stroke-opacity="0.5" stroke-width="0.8"/>
<ellipse cx="842" cy="518" rx="2" ry="3.2" fill="#6a4d3a" fill-opacity="0.55" stroke="#5b4030" stroke-opacity="0.5" stroke-width="0.8"/>
<ellipse cx="464" cy="662" rx="2" ry="3.2" fill="#6a4d3a" fill-opacity="0.55" stroke="#5b4030" stroke-opacity="0.5" stroke-width="0.8"/>
<ellipse cx="560" cy="748" rx="2" ry="3.2" fill="#6a4d3a" fill-opacity="0.55" stroke="#5b4030" stroke-opacity="0.5" stroke-width="0.8"/>
<ellipse cx="591" cy="758" rx="2" ry="3.2" fill="#6a4d3a" fill-opacity="0.55" stroke="#5b4030" stroke-opacity="0.5" stroke-width="0.8"/>
<ellipse cx="616" cy="756" rx="2" ry="3.2" fill="#6a4d3a" fill-opacity="0.55" stroke="#5b4030" stroke-opacity="0.5" stroke-width="0.8"/>
<ellipse cx="819" cy="790" rx="2" ry="3.2" fill="#6a4d3a" fill-opacity="0.55" stroke="#5b4030" stroke-opacity="0.5" stroke-width="0.8"/>
<ellipse cx="838" cy="786" rx="2" ry="3.2" fill="#6a4d3a" fill-opacity="0.55" stroke="#5b4030" stroke-opacity="0.5" stroke-width="0.8"/>
<ellipse cx="953" cy="805" rx="2" ry="3.2" fill="#6a4d3a" fill-opacity="0.55" stroke="#5b4030" stroke-opacity="0.5" stroke-width="0.8"/>
<ellipse cx="1035" cy="815" rx="2" ry="3.2" fill="#6a4d3a" fill-opacity="0.55" stroke="#5b4030" stroke-opacity="0.5" stroke-width="0.8"/>
<ellipse cx="1157" cy="838" rx="2" ry="3.2" fill="#6a4d3a" fill-opacity="0.55" stroke="#5b4030" stroke-opacity="0.5" stroke-width="0.8"/>
</g></svg>
<div class="a" style="left:1208px;top:121.5px;width:720px;height:959.5px;background:#f3f5fb;border:1.5px solid #c3c4cd;border-radius:4px 0 0 0;box-sizing:border-box"></div>
<div class="a" style="left:1209.5px;top:123px;width:711px;height:43px;background:#f1f2f7"></div>
<span class="t" style="left:1218.00px;top:133.92px;font-size:19px;line-height:19px;color:#47474c;letter-spacing:0.113px;font-weight:700;">Default Tray</span>
<svg style="left:1871px;top:136px" width="17" height="17" viewBox="0 0 17 17" fill="none" stroke="#55555a" stroke-width="1.3">
      <rect x="0.7" y="0.7" width="15.2" height="15.2" rx="2.2"/>
      <path d="M5.3 3.6 H11.3 M6.4 3.6 V7.6 L5 9.6 H11.6 L10.2 7.6 V3.6 M8.3 9.6 V13.2" stroke-width="1.4"/><rect x="6.6" y="3.8" width="3.4" height="5.4" fill="#55555a" stroke="none"/></svg>
<svg style="left:1898px;top:136px" width="17" height="17" viewBox="0 0 17 17" fill="none" stroke="#55555a" stroke-width="1.3">
      <rect x="0.7" y="0.7" width="15.2" height="15.2" rx="2.2"/><path d="M4 4 L12.6 12.6 M12.6 4 L4 12.6" stroke-width="1.5"/></svg>
<div class="a" style="left:1209.5px;top:166px;width:711px;height:1.5px;background:#c9cad3"></div>
<div class="a" style="left:1211px;top:168.7px;width:705px;height:38.3px;background:#dfe0e8"></div>
<svg style="left:1221px;top:182.5px" width="18" height="11" viewBox="0 0 18 11" fill="none" stroke="#6a6a70" stroke-width="1.7" stroke-linecap="round" stroke-linejoin="round"><path d="M1 1 L9 9.6 L17 1"/></svg>
<span class="t" style="left:1249.00px;top:179.99px;font-size:18.8px;line-height:18.8px;color:#47474c;letter-spacing:0.040px;">Entity Info</span>
<div class="a" style="left:1883px;top:172.3px;width:31.5px;height:30.5px;background:#fbfbfd;border:1.5px solid #c6c7cf;border-radius:3.5px;box-sizing:border-box"></div><svg style="left:1893.55px;top:182.35000000000002px" width="10.4" height="10.4" viewBox="0 0 10.4 10.4" fill="none" stroke="#66666b" stroke-width="1.5"><path d="M0.6 0.6 L9.8 9.8 M9.8 0.6 L0.6 9.8"/></svg>
<span class="t" style="left:1308.00px;top:225.39px;font-size:18.8px;line-height:18.8px;color:#333338;letter-spacing:-0.021px;font-weight:700;">ponent (1 in model)</span>
<div class="a" style="left:1300px;top:256.5px;width:603.5px;height:2px;background:#d4d5dc"></div>
<div class="a" style="left:1225px;top:268px;width:74.5px;height:76px;background:#fff;border:1.5px solid #b7b8c1;border-radius:3.5px;box-sizing:border-box;overflow:hidden"><svg style="left:0;top:0" width="72" height="73" viewBox="0 0 72 73"><path d="M1.5 3 L70 71.5 L1.5 71.5Z" fill="#a2b4c6"/></svg></div>
<span class="t" style="left:1312.30px;top:273.29px;font-size:18.8px;line-height:18.8px;color:#47474c;letter-spacing:-0.512px;">Tag:</span>
<span class="t" style="left:1312.30px;top:322.09px;font-size:18.8px;line-height:18.8px;color:#47474c;letter-spacing:-0.162px;">Instance:</span>
<span class="t" style="left:1312.30px;top:366.09px;font-size:18.8px;line-height:18.8px;color:#47474c;letter-spacing:0.240px;">Definition:</span>
<span class="t" style="left:1312.30px;top:407.09px;font-size:18.8px;line-height:18.8px;color:#47474c;letter-spacing:-0.146px;">Toggles:</span>
<div class="a" style="left:1411px;top:270px;width:492.5px;height:36.3px;background:#f7f8fb;border:1.5px solid #bfc0c9;border-radius:3.5px;box-sizing:border-box"></div>
<span class="t" style="left:1419.00px;top:278.69px;font-size:18.8px;line-height:18.8px;color:#333338;letter-spacing:-0.219px;">Untagged</span>
<svg style="left:1881px;top:285px" width="12" height="6.5" viewBox="0 0 12 6.5"><path d="M0 0 H12 L6 6.5Z" fill="#55555a"/></svg>
<div class="a" style="left:1411px;top:314.3px;width:492.5px;height:35.3px;background:#fdfdfe;border:1.5px solid #bfc0c9;border-radius:3.5px;box-sizing:border-box"></div>
<span class="t" style="left:1416.00px;top:322.09px;font-size:18.8px;line-height:18.8px;color:#b7b7be;letter-spacing:-0.080px;">Enter instance name</span>
<div class="a" style="left:1411px;top:357.3px;width:492.5px;height:36px;background:#fdfdfe;border:1.5px solid #bfc0c9;border-radius:3.5px;box-sizing:border-box"></div>
<span class="t" style="left:1416.00px;top:366.09px;font-size:18.8px;line-height:18.8px;color:#26262a;letter-spacing:-0.157px;">Wood Framed Wall</span>
<div class="a" style="left:1411px;top:400.3px;width:32.3px;height:32.3px;background:#e5e5e9;border:1.5px solid #c2c3ca;border-radius:3.5px;box-sizing:border-box"></div>
<div class="a" style="left:1483px;top:400.3px;width:32.3px;height:32.3px;background:#e5e5e9;border:1.5px solid #c2c3ca;border-radius:3.5px;box-sizing:border-box"></div>
<div class="a" style="left:1519px;top:400.3px;width:32.3px;height:32.3px;background:#e5e5e9;border:1.5px solid #c2c3ca;border-radius:3.5px;box-sizing:border-box"></div>
<svg style="left:1415.5px;top:405px" width="24" height="23" viewBox="0 0 24 23"><path d="M0.9 11.6 C5.2 2.8 18.8 2.8 23.1 11.6 C18.8 19.6 5.2 19.6 0.9 11.6Z" fill="#fff" stroke="#0d0d0d" stroke-width="1.8"/><circle cx="11.6" cy="10.3" r="4.7" fill="#0d0d0d"/><circle cx="11.3" cy="7.9" r="1.3" fill="#fff"/></svg>
<svg style="left:1450px;top:402px" width="26" height="26" viewBox="0 0 26 26" fill="none" stroke="#0d0d0d"><rect x="3.9" y="12.9" width="11.4" height="9.8" fill="#fff" stroke-width="2.1"/><path d="M11.9 12.4 V9.2 A5.2 5.2 0 0 1 22.3 9.2 V13.6" stroke-width="2.7" stroke-linecap="round"/></svg>
<svg style="left:1483px;top:400px" width="32" height="32" viewBox="1483 400 32 32" stroke="#0d0d0d" stroke-width="1.1" stroke-linejoin="round"><path d="M1491.8 411.6 L1501.6 406.8 L1508.2 414.6 L1497.8 419.8 Z" fill="#0d0d0d"/><path d="M1497.8 419.8 L1508.2 414.6 L1508.4 421.6 L1499.2 426.4 Z" fill="#fff"/><path d="M1491.8 411.6 L1497.8 419.8 L1499.2 426.4 L1494 418.4 Z" fill="#d9d9dd"/></svg>
<svg style="left:1519px;top:400px" width="32" height="32" viewBox="1519 400 32 32" stroke="#0d0d0d" stroke-width="1.1" stroke-linejoin="round"><path d="M1533.6 423 L1541.4 419.2 L1545 424 L1537 428 Z" fill="#0d0d0d"/><path d="M1525 411 L1534.4 406.6 L1540 414.6 L1530.6 419 Z" fill="#f4f4f6"/><path d="M1530.6 419 L1540 414.6 L1541 419 L1531.8 423.4 Z" fill="#fff"/></svg>
<div class="a" style="left:1411px;top:439.8px;width:492.5px;height:36.5px;background:linear-gradient(#fdfdfe,#f1f1f5);border:1.5px solid #c0c1c9;border-radius:3.5px;box-sizing:border-box"></div>
<span class="t" style="left:1617.00px;top:447.39px;font-size:18.8px;line-height:18.8px;color:#333338;letter-spacing:-0.065px;">Configure</span>
<div class="a" style="left:1211px;top:554.25px;width:705px;height:39px;background:#dfe0e8"></div>
<svg style="left:1224.5px;top:564.25px" width="11" height="19" viewBox="0 0 11 19" fill="none" stroke="#6a6a70" stroke-width="1.7" stroke-linecap="round" stroke-linejoin="round"><path d="M1 1 L9.6 9.5 L1 18"/></svg>
<span class="t" style="left:1249.00px;top:565.74px;font-size:18.8px;line-height:18.8px;color:#47474c;letter-spacing:0.092px;">Materials</span>
<div class="a" style="left:1883px;top:558.45px;width:31.5px;height:30.5px;background:#fbfbfd;border:1.5px solid #c6c7cf;border-radius:3.5px;box-sizing:border-box"></div><svg style="left:1893.55px;top:568.5px" width="10.4" height="10.4" viewBox="0 0 10.4 10.4" fill="none" stroke="#66666b" stroke-width="1.5"><path d="M0.6 0.6 L9.8 9.8 M9.8 0.6 L0.6 9.8"/></svg>
<div class="a" style="left:1211px;top:596.25px;width:705px;height:37.5px;background:#dfe0e8"></div>
<svg style="left:1224.5px;top:605.5px" width="11" height="19" viewBox="0 0 11 19" fill="none" stroke="#6a6a70" stroke-width="1.7" stroke-linecap="round" stroke-linejoin="round"><path d="M1 1 L9.6 9.5 L1 18"/></svg>
<span class="t" style="left:1249.00px;top:606.99px;font-size:18.8px;line-height:18.8px;color:#47474c;letter-spacing:0.045px;">Components</span>
<div class="a" style="left:1883px;top:599.7px;width:31.5px;height:30.5px;background:#fbfbfd;border:1.5px solid #c6c7cf;border-radius:3.5px;box-sizing:border-box"></div><svg style="left:1893.55px;top:609.75px" width="10.4" height="10.4" viewBox="0 0 10.4 10.4" fill="none" stroke="#66666b" stroke-width="1.5"><path d="M0.6 0.6 L9.8 9.8 M9.8 0.6 L0.6 9.8"/></svg>
<div class="a" style="left:1211px;top:636.75px;width:705px;height:37.5px;background:#dfe0e8"></div>
<svg style="left:1224.5px;top:646.0px" width="11" height="19" viewBox="0 0 11 19" fill="none" stroke="#6a6a70" stroke-width="1.7" stroke-linecap="round" stroke-linejoin="round"><path d="M1 1 L9.6 9.5 L1 18"/></svg>
<span class="t" style="left:1249.00px;top:647.49px;font-size:18.8px;line-height:18.8px;color:#47474c;letter-spacing:-0.639px;">Styles</span>
<div class="a" style="left:1883px;top:640.2px;width:31.5px;height:30.5px;background:#fbfbfd;border:1.5px solid #c6c7cf;border-radius:3.5px;box-sizing:border-box"></div><svg style="left:1893.55px;top:650.25px" width="10.4" height="10.4" viewBox="0 0 10.4 10.4" fill="none" stroke="#66666b" stroke-width="1.5"><path d="M0.6 0.6 L9.8 9.8 M9.8 0.6 L0.6 9.8"/></svg>
<div class="a" style="left:1211px;top:677.25px;width:705px;height:37.5px;background:#dfe0e8"></div>
<svg style="left:1224.5px;top:686.5px" width="11" height="19" viewBox="0 0 11 19" fill="none" stroke="#6a6a70" stroke-width="1.7" stroke-linecap="round" stroke-linejoin="round"><path d="M1 1 L9.6 9.5 L1 18"/></svg>
<span class="t" style="left:1249.00px;top:687.99px;font-size:18.8px;line-height:18.8px;color:#47474c;letter-spacing:0.096px;">Environments</span>
<div class="a" style="left:1883px;top:680.7px;width:31.5px;height:30.5px;background:#fbfbfd;border:1.5px solid #c6c7cf;border-radius:3.5px;box-sizing:border-box"></div><svg style="left:1893.55px;top:690.75px" width="10.4" height="10.4" viewBox="0 0 10.4 10.4" fill="none" stroke="#66666b" stroke-width="1.5"><path d="M0.6 0.6 L9.8 9.8 M9.8 0.6 L0.6 9.8"/></svg>
<div class="a" style="left:1211px;top:717.75px;width:705px;height:37.5px;background:#dfe0e8"></div>
<svg style="left:1224.5px;top:727.0px" width="11" height="19" viewBox="0 0 11 19" fill="none" stroke="#6a6a70" stroke-width="1.7" stroke-linecap="round" stroke-linejoin="round"><path d="M1 1 L9.6 9.5 L1 18"/></svg>
<span class="t" style="left:1249.00px;top:728.49px;font-size:18.8px;line-height:18.8px;color:#47474c;letter-spacing:-0.704px;">Tags</span>
<div class="a" style="left:1883px;top:721.2px;width:31.5px;height:30.5px;background:#fbfbfd;border:1.5px solid #c6c7cf;border-radius:3.5px;box-sizing:border-box"></div><svg style="left:1893.55px;top:731.25px" width="10.4" height="10.4" viewBox="0 0 10.4 10.4" fill="none" stroke="#66666b" stroke-width="1.5"><path d="M0.6 0.6 L9.8 9.8 M9.8 0.6 L0.6 9.8"/></svg>
<div class="a" style="left:1211px;top:758.25px;width:705px;height:37.5px;background:#dfe0e8"></div>
<svg style="left:1224.5px;top:767.5px" width="11" height="19" viewBox="0 0 11 19" fill="none" stroke="#6a6a70" stroke-width="1.7" stroke-linecap="round" stroke-linejoin="round"><path d="M1 1 L9.6 9.5 L1 18"/></svg>
<span class="t" style="left:1249.00px;top:768.99px;font-size:18.8px;line-height:18.8px;color:#47474c;letter-spacing:-0.440px;">Shadows</span>
<div class="a" style="left:1883px;top:761.7px;width:31.5px;height:30.5px;background:#fbfbfd;border:1.5px solid #c6c7cf;border-radius:3.5px;box-sizing:border-box"></div><svg style="left:1893.55px;top:771.75px" width="10.4" height="10.4" viewBox="0 0 10.4 10.4" fill="none" stroke="#66666b" stroke-width="1.5"><path d="M0.6 0.6 L9.8 9.8 M9.8 0.6 L0.6 9.8"/></svg>
<div class="a" style="left:1211px;top:798.75px;width:705px;height:37.5px;background:#dfe0e8"></div>
<svg style="left:1224.5px;top:808.0px" width="11" height="19" viewBox="0 0 11 19" fill="none" stroke="#6a6a70" stroke-width="1.7" stroke-linecap="round" stroke-linejoin="round"><path d="M1 1 L9.6 9.5 L1 18"/></svg>
<span class="t" style="left:1249.00px;top:809.49px;font-size:18.8px;line-height:18.8px;color:#47474c;letter-spacing:-1.002px;">Scenes</span>
<div class="a" style="left:1883px;top:802.2px;width:31.5px;height:30.5px;background:#fbfbfd;border:1.5px solid #c6c7cf;border-radius:3.5px;box-sizing:border-box"></div><svg style="left:1893.55px;top:812.25px" width="10.4" height="10.4" viewBox="0 0 10.4 10.4" fill="none" stroke="#66666b" stroke-width="1.5"><path d="M0.6 0.6 L9.8 9.8 M9.8 0.6 L0.6 9.8"/></svg>
<div class="a" style="left:1211px;top:839.25px;width:705px;height:37.5px;background:#dfe0e8"></div>
<svg style="left:1224.5px;top:848.5px" width="11" height="19" viewBox="0 0 11 19" fill="none" stroke="#6a6a70" stroke-width="1.7" stroke-linecap="round" stroke-linejoin="round"><path d="M1 1 L9.6 9.5 L1 18"/></svg>
<span class="t" style="left:1249.00px;top:849.99px;font-size:18.8px;line-height:18.8px;color:#47474c;letter-spacing:0.405px;">Instructor</span>
<div class="a" style="left:1883px;top:842.7px;width:31.5px;height:30.5px;background:#fbfbfd;border:1.5px solid #c6c7cf;border-radius:3.5px;box-sizing:border-box"></div><svg style="left:1893.55px;top:852.75px" width="10.4" height="10.4" viewBox="0 0 10.4 10.4" fill="none" stroke="#66666b" stroke-width="1.5"><path d="M0.6 0.6 L9.8 9.8 M9.8 0.6 L0.6 9.8"/></svg>
<div class="a" style="left:1204.5px;top:591px;width:1.5px;height:1.5px;background:#bcbdc6"></div>
<div class="a" style="left:1204.5px;top:595px;width:1.5px;height:1.5px;background:#bcbdc6"></div>
<div class="a" style="left:1204.5px;top:599px;width:1.5px;height:1.5px;background:#bcbdc6"></div>
<div class="a" style="left:1204.5px;top:603px;width:1.5px;height:1.5px;background:#bcbdc6"></div>
<div class="a" style="left:1204.5px;top:607px;width:1.5px;height:1.5px;background:#bcbdc6"></div>
<div class="a" style="left:1204.5px;top:611px;width:1.5px;height:1.5px;background:#bcbdc6"></div>
<div class="a" style="left:1204.5px;top:615px;width:1.5px;height:1.5px;background:#bcbdc6"></div>
<svg style="left:0;top:0" width="1920" height="124" viewBox="0 0 1920 124">
<path d="M461.5 84 A17 17 0 0 1 480 79.5" fill="none" stroke="#1e9ad6" stroke-width="2"/>
<path d="M490 91 A19 19 0 0 1 486 107.5" fill="none" stroke="#1e9ad6" stroke-width="2"/>
<path d="M462.5 98.5 A10.5 10.5 0 0 1 473.5 89.3" fill="none" stroke="#1d4468" stroke-width="2"/>
<path d="M481.3 97.5 A10.5 10.5 0 0 1 472.5 108" fill="none" stroke="#1d4468" stroke-width="2"/>
<polygon points="481.13,93.61 487.30,87.39 489.61,89.68 490.80,79.60 480.73,80.88 483.04,83.17 476.87,89.39" fill="#f01414"/>
<rect x="501.7" y="71.7" width="45" height="45.3" rx="6" fill="#dde9f6" stroke="#4783b3" stroke-width="1.5"/>
<polygon points="526.50,89.50 526.50,84.50 528.75,84.50 524.00,77.50 519.25,84.50 521.50,84.50 521.50,89.50" fill="#f01414"/><polygon points="521.50,98.50 521.50,103.50 519.25,103.50 524.00,110.50 528.75,103.50 526.50,103.50 526.50,98.50" fill="#f01414"/><polygon points="519.50,91.50 514.50,91.50 514.50,89.25 507.50,94.00 514.50,98.75 514.50,96.50 519.50,96.50" fill="#f01414"/><polygon points="528.50,96.50 533.50,96.50 533.50,98.75 540.50,94.00 533.50,89.25 533.50,91.50 528.50,91.50" fill="#f01414"/>
<path d="M561.54 93.58 A10.5 10.5 0 0 1 578.02 85.90" fill="none" stroke="#f01414" stroke-width="2.6"/><polygon points="582.53,89.05 579.66,80.94 573.93,89.13" fill="#f01414"/><path d="M582.46 95.42 A10.5 10.5 0 0 1 565.98 103.10" fill="none" stroke="#f01414" stroke-width="2.6"/><polygon points="561.47,99.95 564.34,108.06 570.07,99.87" fill="#f01414"/>
<rect x="604.5" y="80" width="30.5" height="28" fill="#dbe9f7" stroke="#1e9ad6" stroke-width="2"/>
<path d="M604.5 88.5 H624.5 V108 H604.5 Z" fill="none" stroke="#1d4468" stroke-width="2.2"/>
<polygon points="623.21,96.03 629.29,89.42 631.68,91.62 632.50,81.50 622.48,83.16 624.88,85.36 618.79,91.97" fill="#f01414"/>
<path d="M653.3 105 L664.3 83.8 V105 Z" fill="#fff" stroke="#1d4468" stroke-width="1.8" stroke-linejoin="miter"/>
<path d="M670.6 83.8 L682 105 H670.6 Z" fill="#dbe9f7" stroke="#1e9ad6" stroke-width="1.8"/>
<path d="M667.4 79 V107" stroke="#e0202c" stroke-width="1.6" stroke-dasharray="3.2 1.6"/>
<rect x="695.2" y="78.3" width="2.6" height="29.299999999999997" fill="#98989d"/>
<g transform="rotate(-22 724 90.5)"><rect x="714" y="81" width="20.5" height="19.5" rx="4" fill="#dbe9f7" stroke="#1d4468" stroke-width="1.9"/></g>
<circle cx="724" cy="91" r="5.2" fill="#f01414"/>
<path d="M722 101.2 L712.3 106.6 L713.6 109.6" fill="none" stroke="#1d4468" stroke-width="1.7"/>
<path d="M713.2 93 C712.5 97 715 100 719.5 100.5" fill="none" stroke="#1d4468" stroke-width="1.6"/>
<g transform="rotate(-38 773.8 93)"><rect x="763.6" y="82.6" width="20.4" height="21.5" rx="4.5" fill="#dbe9f7" stroke="#1d4468" stroke-width="1.9"/></g>
<path d="M773.6 82.6 C776.5 76.5 785 78.6 783.4 84.6 C782.4 88.6 778.6 91.6 775.4 92.2" fill="none" stroke="#1d4468" stroke-width="1.7"/>
<path d="M769.6 85.4 C763.6 86 759 91 757.7 100.4 C757.5 103.2 761 103.7 761.5 100.4 C762.1 95.9 764.2 91.9 769.4 89.2 Z" fill="#1e9ad6" stroke="#1e9ad6" stroke-width="1.6" stroke-linejoin="round"/>
<rect x="800.2" y="78.3" width="2.6" height="29.299999999999997" fill="#98989d"/>
<path d="M826 86.7 C818 87.3 814.9 90.2 814.9 92.8 C814.9 95.3 817.4 97.2 821 98.2" fill="none" stroke="#f01414" stroke-width="4.6"/>
<path d="M833 86.7 C841 87.3 844.3 90.2 844.3 92.8 C844.3 95.5 841.5 97.5 837.6 98.5" fill="none" stroke="#f01414" stroke-width="4.6"/>
<polygon points="819.6,93.4 826.9,99.4 818.2,102" fill="#f01414"/><polygon points="839,93.6 831.6,99.7 840.4,102.3" fill="#f01414"/>
<rect x="828.1" y="78.5" width="1.9" height="28.5" fill="#1d4468"/>
<polygon points="873.60,81.25 870.50,81.25 870.50,79.00 864.00,83.50 870.50,88.00 870.50,85.75 873.60,85.75" fill="#f01414"/>
<polygon points="878.20,85.75 881.80,85.75 881.80,88.00 888.30,83.50 881.80,79.00 881.80,81.25 878.20,81.25" fill="#f01414"/>
<path d="M874.2 95.5 V87 A1.6 1.6 0 0 1 877.4 87 V92 L879.2 90.3 A1.5 1.5 0 0 1 881.8 91.4 L883 91.5 A1.5 1.5 0 0 1 885.6 92.6 L886.8 92.8 A1.5 1.5 0 0 1 889.2 94 V100.5 C889.2 105.5 886 108.6 881.6 108.6 C877.5 108.6 875.4 106.5 873.3 103 L869.6 96.5 C868.8 94.8 870.8 93.6 872 95 Z" fill="#dbe9f7" stroke="#1d4468" stroke-width="1.6" stroke-linejoin="round"/>
<circle cx="931" cy="88.7" r="9" fill="#f3f4f9" stroke="#1d4468" stroke-width="2.3"/>
<path d="M924.2 96 L913.5 106.8" stroke="#174a78" stroke-width="4" stroke-linecap="round"/>
<circle cx="973.6" cy="94" r="6.6" fill="#f3f4f9" stroke="#1d4468" stroke-width="2"/>
<path d="M968.6 99.2 L959.8 107.4" stroke="#174a78" stroke-width="3.2" stroke-linecap="round"/>
<polygon points="966.41,84.59 963.16,81.33 964.75,79.74 957.50,78.50 958.74,85.75 960.33,84.16 963.59,87.41" fill="#f01414"/>
<polygon points="982.91,87.41 986.17,84.16 987.76,85.75 989.00,78.50 981.75,79.74 983.34,81.33 980.09,84.59" fill="#f01414"/>
<polygon points="980.61,102.43 983.50,105.25 981.94,106.86 989.20,108.00 987.86,100.77 986.29,102.38 983.39,99.57" fill="#f01414"/>
<rect x="1002.2" y="78.3" width="2.6" height="29.299999999999997" fill="#98989d"/>
<polygon points="1030.50,75.80 1046.26,84.40 1046.26,101.60 1030.50,110.20 1014.74,101.60 1014.74,84.40" fill="#1561a0"/>
<polygon points="1030.50,80.00 1042.45,86.50 1042.45,99.50 1030.50,106.00 1018.55,99.50 1018.55,86.50" fill="#f1f2f7"/>
<polygon points="1030.50,82.20 1040.37,87.60 1040.37,98.40 1030.50,103.80 1020.63,98.40 1020.63,87.60" fill="#1561a0"/>
<polygon points="1030.50,87.20 1035.70,90.10 1035.70,95.90 1030.50,98.80 1025.30,95.90 1025.30,90.10" fill="#eef3fa"/>
<path d="M1030.5 93 V98 M1030.5 93 L1026.1 90.4 M1030.5 93 L1034.9 90.4" stroke="#1561a0" stroke-width="1.4"/>
<path d="M1017.5 86 L1030.5 78.4 L1043.5 86" fill="none" stroke="#f1f2f7" stroke-width="0"/>
<path d="M1040.3 96.6 H1048.3 V104.4 H1052.2 L1044.3 113 L1036.4 104.4 H1040.3 Z" fill="#fff" stroke="#1561a0" stroke-width="1.7" stroke-linejoin="round"/>
<path d="M1064 81.3 L1079 87.9 L1094 82.1" fill="none" stroke="#1561a0" stroke-width="5.4"/><path d="M1064 87.3 L1079 93.9 L1094.6 87.9" fill="none" stroke="#1561a0" stroke-width="2.4"/><path d="M1093.4 79.5 V88.5" stroke="#1561a0" stroke-width="2.4"/><path d="M1064 101.5 L1077.5 95.1" fill="none" stroke="#1561a0" stroke-width="5.2"/><path d="M1064 106.9 L1082 98.5" fill="none" stroke="#1561a0" stroke-width="2.4"/><path d="M1065 98.5 V107.5" stroke="#1561a0" stroke-width="2.2"/><path d="M1089.8 77.9 L1092.2 76.6 L1094.6 77.9 L1092.2 79.2 Z" fill="#1561a0"/>
<circle cx="1089.8" cy="104.2" r="8.9" fill="#f6f7fb" stroke="#1561a0" stroke-width="1.7"/>
<path d="M1085.7 102.6 A4 4 0 0 1 1093 101.6 M1093.3 105.4 A4 4 0 0 1 1086 106.4" fill="none" stroke="#1561a0" stroke-width="1.5"/><polygon points="1094.6,100 1094.4,103.4 1091.3,102.4" fill="#1561a0"/><polygon points="1084.4,108 1084.6,104.6 1087.7,105.6" fill="#1561a0"/>
<path d="M1112.7 98 L1127.5 90.2 L1142.3 98 L1127.5 105.8 Z" fill="#1561a0" stroke="#f1f2f7" stroke-width="1.2"/>
<path d="M1112.7 91.5 L1127.5 83.7 L1142.3 91.5 L1127.5 99.3 Z" fill="#1561a0" stroke="#f1f2f7" stroke-width="1.2"/>
<path d="M1112.7 85 L1127.5 77.2 L1142.3 85 L1127.5 92.8 Z" fill="#1561a0" stroke="#f1f2f7" stroke-width="1.2"/>
<path d="M1112.7 101 L1127.5 108.8 L1136.5 104" fill="none" stroke="#1561a0" stroke-width="2.4"/>
<path d="M1121.0 85 L1127.5 81.6 L1134.0 85 L1127.5 88.4 Z" fill="none" stroke="#f1f2f7" stroke-width="1.5"/><circle cx="1127.5" cy="85.4" r="1.3" fill="#f1f2f7"/>
<path d="M1133 98.7 H1141 V95 L1150.5 102.7 L1141 110.4 V106.7 H1133 Z" fill="#fff" stroke="#1561a0" stroke-width="1.7" stroke-linejoin="round"/>
<rect x="1155.2" y="78.3" width="2.6" height="29.299999999999997" fill="#98989d"/>
<path d="M1169.5 81.3 L1184.5 87.9 L1199.5 82.1" fill="none" stroke="#1561a0" stroke-width="5.4"/><path d="M1169.5 87.3 L1184.5 93.9 L1200.1 87.9" fill="none" stroke="#1561a0" stroke-width="2.4"/><path d="M1198.9 79.5 V88.5" stroke="#1561a0" stroke-width="2.4"/><path d="M1169.5 101.5 L1183.0 95.1" fill="none" stroke="#1561a0" stroke-width="5.2"/><path d="M1169.5 106.9 L1187.5 98.5" fill="none" stroke="#1561a0" stroke-width="2.4"/><path d="M1170.5 98.5 V107.5" stroke="#1561a0" stroke-width="2.2"/><path d="M1195.3 77.9 L1197.7 76.6 L1200.1 77.9 L1197.7 79.2 Z" fill="#1561a0"/>
<rect x="1191.8999999999999" y="95.39999999999999" width="3.6" height="3.6" transform="rotate(0 1193.8 104.3)" fill="#f6f7fb" stroke="#1561a0" stroke-width="1.4"/><rect x="1191.8999999999999" y="95.39999999999999" width="3.6" height="3.6" transform="rotate(45 1193.8 104.3)" fill="#f6f7fb" stroke="#1561a0" stroke-width="1.4"/><rect x="1191.8999999999999" y="95.39999999999999" width="3.6" height="3.6" transform="rotate(90 1193.8 104.3)" fill="#f6f7fb" stroke="#1561a0" stroke-width="1.4"/><rect x="1191.8999999999999" y="95.39999999999999" width="3.6" height="3.6" transform="rotate(135 1193.8 104.3)" fill="#f6f7fb" stroke="#1561a0" stroke-width="1.4"/><rect x="1191.8999999999999" y="95.39999999999999" width="3.6" height="3.6" transform="rotate(180 1193.8 104.3)" fill="#f6f7fb" stroke="#1561a0" stroke-width="1.4"/><rect x="1191.8999999999999" y="95.39999999999999" width="3.6" height="3.6" transform="rotate(225 1193.8 104.3)" fill="#f6f7fb" stroke="#1561a0" stroke-width="1.4"/><rect x="1191.8999999999999" y="95.39999999999999" width="3.6" height="3.6" transform="rotate(270 1193.8 104.3)" fill="#f6f7fb" stroke="#1561a0" stroke-width="1.4"/><rect x="1191.8999999999999" y="95.39999999999999" width="3.6" height="3.6" transform="rotate(315 1193.8 104.3)" fill="#f6f7fb" stroke="#1561a0" stroke-width="1.4"/>
<circle cx="1193.8" cy="104.3" r="5.9" fill="#f6f7fb" stroke="#1561a0" stroke-width="1.5"/>
<rect x="1192.5" y="96.1" width="2.3" height="3.4" transform="rotate(0 1193.8 104.3)" fill="#f6f7fb"/><rect x="1192.5" y="96.1" width="2.3" height="3.4" transform="rotate(45 1193.8 104.3)" fill="#f6f7fb"/><rect x="1192.5" y="96.1" width="2.3" height="3.4" transform="rotate(90 1193.8 104.3)" fill="#f6f7fb"/><rect x="1192.5" y="96.1" width="2.3" height="3.4" transform="rotate(135 1193.8 104.3)" fill="#f6f7fb"/><rect x="1192.5" y="96.1" width="2.3" height="3.4" transform="rotate(180 1193.8 104.3)" fill="#f6f7fb"/><rect x="1192.5" y="96.1" width="2.3" height="3.4" transform="rotate(225 1193.8 104.3)" fill="#f6f7fb"/><rect x="1192.5" y="96.1" width="2.3" height="3.4" transform="rotate(270 1193.8 104.3)" fill="#f6f7fb"/><rect x="1192.5" y="96.1" width="2.3" height="3.4" transform="rotate(315 1193.8 104.3)" fill="#f6f7fb"/>
<circle cx="1193.8" cy="104.3" r="2.6" fill="#f1f2f7" stroke="#1561a0" stroke-width="1.5"/>
<rect x="1212.2" y="78.3" width="2.6" height="29.299999999999997" fill="#98989d"/>
<circle cx="1241" cy="93.7" r="14.3" fill="none" stroke="#1d4468" stroke-width="2"/>
<circle cx="1241" cy="91.3" r="4.1" fill="#dbe9f7" stroke="#1d4468" stroke-width="1.9"/>
<path d="M1232.3 104.6 A9.2 8.6 0 0 1 1249.7 104.6" fill="none" stroke="#1d4468" stroke-width="1.9"/>
<circle cx="1250.6" cy="103.6" r="5.6" fill="#3aa648"/><path d="M1247.7 103.8 L1249.9 106 L1253.6 101.6" fill="none" stroke="#fff" stroke-width="1.7"/>
<path d="M1268.5 91 H1279.7 L1274.1 96.8 Z" fill="#88888d"/>
<rect x="1292.0" y="80.6" width="1.6" height="1.6" fill="#c9cad2"/>
<rect x="1296.6000000000001" y="80.6" width="1.6" height="1.6" fill="#c9cad2"/>
<rect x="1292.0" y="85.1" width="1.6" height="1.6" fill="#c9cad2"/>
<rect x="1296.6000000000001" y="85.1" width="1.6" height="1.6" fill="#c9cad2"/>
<rect x="1292.0" y="89.6" width="1.6" height="1.6" fill="#c9cad2"/>
<rect x="1296.6000000000001" y="89.6" width="1.6" height="1.6" fill="#c9cad2"/>
<rect x="1292.0" y="94.1" width="1.6" height="1.6" fill="#c9cad2"/>
<rect x="1296.6000000000001" y="94.1" width="1.6" height="1.6" fill="#c9cad2"/>
<rect x="1292.0" y="98.6" width="1.6" height="1.6" fill="#c9cad2"/>
<rect x="1296.6000000000001" y="98.6" width="1.6" height="1.6" fill="#c9cad2"/>
<rect x="1292.0" y="103.1" width="1.6" height="1.6" fill="#c9cad2"/>
<rect x="1296.6000000000001" y="103.1" width="1.6" height="1.6" fill="#c9cad2"/>
<path d="M1319 80 H1333 L1339.3 86.3 V107.6 H1319 Z" fill="#eef1f8" stroke="#1d4468" stroke-width="2" stroke-linejoin="round"/><path d="M1333 80 V86.3 H1339.3" fill="none" stroke="#1d4468" stroke-width="1.7"/>
<circle cx="1377" cy="90" r="7" fill="#10457a"/>
<path d="M1366 108.6 V104.5 A5.5 5.5 0 0 1 1371.5 99 H1382.7 A5.5 5.5 0 0 1 1388.2 104.5 V108.6 Z" fill="#10457a"/>
<path d="M1384 82.3 H1391.2 M1387.6 78.7 V85.9" stroke="#1e9ad6" stroke-width="1.5"/>
</svg>
<div class="a" style="left:449px;top:195px;width:863px;height:89px;background:#eceef5;"></div>
<div class="a" style="left:449px;top:199px;width:859px;height:29.5px;background:#9db5d3;"></div>
<div class="a" style="left:449px;top:228.5px;width:859px;height:55px;background:#f0f2f7;"></div>
<svg style="left:1288px;top:206px" width="14" height="14" viewBox="0 0 14 14" fill="none" stroke="#1d5a8c" stroke-width="1.4"><path d="M1 1 L13 13 M13 1 L1 13"/></svg>
<svg style="left:0;top:0" width="1920" height="290" viewBox="0 0 1920 290">
<clipPath id="dc471"><path d="M471.3 237.6 C474.8 243.6 485.5 250.6 485.5 259.9 A14.2 14.2 0 0 1 457.1 259.9 C457.1 250.6 467.8 243.6 471.3 237.6 Z"/></clipPath><path d="M471.3 237.6 C474.8 243.6 485.5 250.6 485.5 259.9 A14.2 14.2 0 0 1 457.1 259.9 C457.1 250.6 467.8 243.6 471.3 237.6 Z" fill="#fbfcfe"/><rect x="455.3" y="252" width="32" height="40" fill="#1190d6" clip-path="url(#dc471)"/><path d="M471.3 237.6 C474.8 243.6 485.5 250.6 485.5 259.9 A14.2 14.2 0 0 1 457.1 259.9 C457.1 250.6 467.8 243.6 471.3 237.6 Z" fill="none" stroke="#154a7a" stroke-width="2" stroke-linejoin="round"/>
<clipPath id="dc519"><path d="M519.3 237.6 C522.8 243.6 533.5 250.6 533.5 259.9 A14.2 14.2 0 0 1 505.09999999999997 259.9 C505.09999999999997 250.6 515.8 243.6 519.3 237.6 Z"/></clipPath><path d="M519.3 237.6 C522.8 243.6 533.5 250.6 533.5 259.9 A14.2 14.2 0 0 1 505.09999999999997 259.9 C505.09999999999997 250.6 515.8 243.6 519.3 237.6 Z" fill="#1190d6"/><path d="M519.3 237.6 C522.8 243.6 533.5 250.6 533.5 259.9 A14.2 14.2 0 0 1 505.09999999999997 259.9 C505.09999999999997 250.6 515.8 243.6 519.3 237.6 Z" fill="none" stroke="#154a7a" stroke-width="2" stroke-linejoin="round"/>
<rect x="545.5" y="234.7" width="44.7" height="44.8" rx="5" fill="#dde9f6" stroke="#3f80b2" stroke-width="1.5"/>
<clipPath id="dc567"><path d="M567.3 238 C570.8 244 581.5 251 581.5 260.3 A14.2 14.2 0 0 1 553.0999999999999 260.3 C553.0999999999999 251 563.8 244 567.3 238 Z"/></clipPath><path d="M567.3 238 C570.8 244 581.5 251 581.5 260.3 A14.2 14.2 0 0 1 553.0999999999999 260.3 C553.0999999999999 251 563.8 244 567.3 238 Z" fill="#e6eef8"/><g clip-path="url(#dc567)"><path d="M545.3 268.3 L589.3 232.3" stroke="#1d4468" stroke-width="1.3"/><path d="M545.3 276.8 L589.3 240.8" stroke="#1d4468" stroke-width="1.3"/><path d="M545.3 285.3 L589.3 249.3" stroke="#1d4468" stroke-width="1.3"/></g><path d="M567.3 238 C570.8 244 581.5 251 581.5 260.3 A14.2 14.2 0 0 1 553.0999999999999 260.3 C553.0999999999999 251 563.8 244 567.3 238 Z" fill="none" stroke="#154a7a" stroke-width="2" stroke-linejoin="round"/>
<rect x="594.7" y="241.2" width="2.6" height="29.30000000000001" fill="#98989d"/>
<g transform="translate(628 251.8) rotate(45)"><path d="M-9.5 12.4 V0 A9.5 9.5 0 0 1 9.5 0 V12.4" fill="none" stroke="#dfe0e6" stroke-width="8.6"/><rect x="-13.8" y="13.8" width="8.6" height="3.8" fill="#808085"/><rect x="5.2" y="13.8" width="8.6" height="3.8" fill="#808085"/></g>
<circle cx="609.6" cy="271.2" r="5" fill="#fafafc"/><circle cx="609.6" cy="271.2" r="3.6" fill="#77777c"/>
<g transform="translate(676.4 251.8) rotate(45)"><path d="M-9.5 12.4 V0 A9.5 9.5 0 0 1 9.5 0 V12.4" fill="none" stroke="#189ad8" stroke-width="8.6"/><rect x="-13.8" y="13.8" width="8.6" height="3.8" fill="#1a4470"/><rect x="5.2" y="13.8" width="8.6" height="3.8" fill="#1a4470"/></g>
<path transform="translate(657.6 269.6)" d="M-6.75 4.5 A3.24 3.24 0 0 1 -5.58 -1.62 A3.7800000000000002 3.7800000000000002 0 0 1 1.08 -3.24 A3.42 3.42 0 0 1 6.48 -0.54 A2.61 2.61 0 0 1 5.9399999999999995 4.5 Z" fill="#164472" stroke="none" stroke-width="0" stroke-linejoin="round"/>
<rect x="698.5" y="234.7" width="44.7" height="44.8" rx="5" fill="#dde9f6" stroke="#3f80b2" stroke-width="1.5"/>
<g transform="translate(724.2 251.8) rotate(45)"><path d="M-9.5 12.4 V0 A9.5 9.5 0 0 1 9.5 0 V12.4" fill="none" stroke="#189ad8" stroke-width="8.6"/><rect x="-13.8" y="13.8" width="8.6" height="3.8" fill="#1a4470"/><rect x="5.2" y="13.8" width="8.6" height="3.8" fill="#1a4470"/></g>
<circle cx="704.7" cy="270.8" r="6.2" fill="#1b6fb0"/><g transform="translate(704.9 270.4) scale(0.6)" fill="none" stroke="#cfe4f5" stroke-width="2.3" stroke-linejoin="round"><path d="M-5.5 -2.5 L0.5 -6 L6 -2.8 V4 L0.5 7.2 V1 L-2.8 -1" /><path d="M-5.5 1 L-2.5 2.8 V6 M-5.5 4.2 L-3 5.6"/><path d="M0.5 -2.8 L3.2 -1.2 V2.4"/></g>
<rect x="747.7" y="241.2" width="2.6" height="29.30000000000001" fill="#98989d"/>
<circle cx="777" cy="256.5" r="20" fill="#10457a"/><path d="M767 256.5 H787 M777 246.5 V266.5" stroke="#fff" stroke-width="3.6"/>
<path d="M812.4 242 L837 271.6" stroke="#1a3e62" stroke-width="2" stroke-dasharray="6.5 3"/>
<circle cx="812.4" cy="241.9" r="5.6" fill="#179ad6"/><circle cx="837" cy="271.6" r="5.9" fill="#f01010"/>
<rect x="853.0" y="241.2" width="2.6" height="29.30000000000001" fill="#98989d"/>
<polygon points="881.6,238.0 900.5,245.8 900.5,266.0 881.6,274.7 862.7,266.0 862.7,245.8" fill="none" stroke="#1d4468" stroke-width="2" stroke-linejoin="round"/><path d="M881.6 238.0 L881.6 243.5" stroke="#1d4468" stroke-width="1.6"/><path d="M900.5 245.8 L895.7 248.5" stroke="#1d4468" stroke-width="1.6"/><path d="M900.5 266.0 L895.6 263.5" stroke="#1d4468" stroke-width="1.6"/><path d="M881.6 274.7 L881.6 269.2" stroke="#1d4468" stroke-width="1.6"/><path d="M862.7 266.0 L867.6 263.5" stroke="#1d4468" stroke-width="1.6"/><path d="M862.7 245.8 L867.5 248.5" stroke="#1d4468" stroke-width="1.6"/>
<polygon points="929.8,238.0 948.7,245.8 948.7,266.0 929.8,274.7 910.9,266.0 910.9,245.8" fill="none" stroke="#1d4468" stroke-width="2" stroke-linejoin="round"/><path d="M929.8 238.0 L929.8 243.5" stroke="#1d4468" stroke-width="1.6"/><path d="M948.7 245.8 L943.9 248.5" stroke="#1d4468" stroke-width="1.6"/><path d="M948.7 266.0 L943.8 263.5" stroke="#1d4468" stroke-width="1.6"/><path d="M929.8 274.7 L929.8 269.2" stroke="#1d4468" stroke-width="1.6"/><path d="M910.9 266.0 L915.8 263.5" stroke="#1d4468" stroke-width="1.6"/><path d="M910.9 245.8 L915.7 248.5" stroke="#1d4468" stroke-width="1.6"/>
<polygon points="978.0,238.0 996.9,245.8 996.9,266.0 978.0,274.7 959.1,266.0 959.1,245.8" fill="none" stroke="#1d4468" stroke-width="2" stroke-linejoin="round"/><path d="M978.0 238.0 L978.0 243.5" stroke="#1d4468" stroke-width="1.6"/><path d="M996.9 245.8 L992.1 248.5" stroke="#1d4468" stroke-width="1.6"/><path d="M996.9 266.0 L992.0 263.5" stroke="#1d4468" stroke-width="1.6"/><path d="M978.0 274.7 L978.0 269.2" stroke="#1d4468" stroke-width="1.6"/><path d="M959.1 266.0 L964.0 263.5" stroke="#1d4468" stroke-width="1.6"/><path d="M959.1 245.8 L963.9 248.5" stroke="#1d4468" stroke-width="1.6"/>
<polygon points="1026.3,238.0 1045.2,245.8 1045.2,266.0 1026.3,274.7 1007.4,266.0 1007.4,245.8" fill="none" stroke="#1d4468" stroke-width="2" stroke-linejoin="round"/><path d="M1026.3 238.0 L1026.3 243.5" stroke="#1d4468" stroke-width="1.6"/><path d="M1045.2 245.8 L1040.4 248.5" stroke="#1d4468" stroke-width="1.6"/><path d="M1045.2 266.0 L1040.3 263.5" stroke="#1d4468" stroke-width="1.6"/><path d="M1026.3 274.7 L1026.3 269.2" stroke="#1d4468" stroke-width="1.6"/><path d="M1007.4 266.0 L1012.3 263.5" stroke="#1d4468" stroke-width="1.6"/><path d="M1007.4 245.8 L1012.2 248.5" stroke="#1d4468" stroke-width="1.6"/>
<rect x="874.6" y="250.2" width="14.4" height="12.4" fill="#d5eaf9" stroke="#58b0e0" stroke-width="1.3"/>
<path transform="translate(930 257)" d="M-7.5 5.0 A3.6 3.6 0 0 1 -6.2 -1.8 A4.2 4.2 0 0 1 1.2 -3.6 A3.8 3.8 0 0 1 7.2 -0.6 A2.9 2.9 0 0 1 6.6 5.0 Z" fill="#f3f4f9" stroke="#6f7f92" stroke-width="1.3" stroke-linejoin="round"/>
<g transform="translate(978.2 256.4) scale(1.12)" fill="none" stroke="#1b78bd" stroke-width="2.3" stroke-linejoin="round"><path d="M-5.5 -2.5 L0.5 -6 L6 -2.8 V4 L0.5 7.2 V1 L-2.8 -1" /><path d="M-5.5 1 L-2.5 2.8 V6 M-5.5 4.2 L-3 5.6"/><path d="M0.5 -2.8 L3.2 -1.2 V2.4"/></g>
<circle cx="1026.5" cy="256.5" r="5.8" fill="none" stroke="#e02424" stroke-width="1.8"/><path d="M1022.6 260.6 L1030.6 252.6" stroke="#e02424" stroke-width="1.8"/>
<rect x="1054.4" y="241.2" width="2.6" height="29.30000000000001" fill="#98989d"/>
<polygon points="1086.70,255.70 1086.70,250.10 1088.70,250.10 1084.40,243.70 1080.10,250.10 1082.10,250.10 1082.10,255.70" fill="#f01414"/><polygon points="1082.10,263.70 1082.10,269.30 1080.10,269.30 1084.40,275.70 1088.70,269.30 1086.70,269.30 1086.70,263.70" fill="#f01414"/><polygon points="1080.40,257.40 1074.80,257.40 1074.80,255.40 1068.40,259.70 1074.80,264.00 1074.80,262.00 1080.40,262.00" fill="#f01414"/><polygon points="1088.40,262.00 1094.00,262.00 1094.00,264.00 1100.40,259.70 1094.00,255.40 1094.00,257.40 1088.40,257.40" fill="#f01414"/>
<path transform="translate(1070.8 242.6)" d="M-6.75 4.5 A3.24 3.24 0 0 1 -5.58 -1.62 A3.7800000000000002 3.7800000000000002 0 0 1 1.08 -3.24 A3.42 3.42 0 0 1 6.48 -0.54 A2.61 2.61 0 0 1 5.9399999999999995 4.5 Z" fill="#164472" stroke="none" stroke-width="0" stroke-linejoin="round"/>
<path d="M1122.74 258.02 A11.3 11.3 0 0 1 1140.48 249.74" fill="none" stroke="#f01414" stroke-width="2.6"/><polygon points="1144.99,252.90 1142.12,244.79 1136.38,252.98" fill="#f01414"/><path d="M1145.26 259.98 A11.3 11.3 0 0 1 1127.52 268.26" fill="none" stroke="#f01414" stroke-width="2.6"/><polygon points="1123.01,265.10 1125.88,273.21 1131.62,265.02" fill="#f01414"/>
<path transform="translate(1119 241.8)" d="M-6.75 4.5 A3.24 3.24 0 0 1 -5.58 -1.62 A3.7800000000000002 3.7800000000000002 0 0 1 1.08 -3.24 A3.42 3.42 0 0 1 6.48 -0.54 A2.61 2.61 0 0 1 5.9399999999999995 4.5 Z" fill="#164472" stroke="none" stroke-width="0" stroke-linejoin="round"/>
<rect x="1159.7" y="241.2" width="2.6" height="29.30000000000001" fill="#98989d"/>
<polygon points="1169.7,247.0 1195.9,240.6 1209.4,260.5 1176.8,272.5" fill="#cfe6f7"/><path d="M1169.7 247.0 L1176.8 272.5" stroke="#1d4468" stroke-width="1.9"/><path d="M1169.7 247.0 L1195.9 240.6" stroke="#1d4468" stroke-width="1.9"/><path d="M1178.4 244.9 L1187.7 268.5" stroke="#1d4468" stroke-width="1.1"/><path d="M1172.1 255.5 L1200.4 247.2" stroke="#1d4468" stroke-width="1.1"/><path d="M1187.2 242.7 L1198.5 264.5" stroke="#1d4468" stroke-width="1.1"/><path d="M1174.4 264.0 L1204.9 253.9" stroke="#1d4468" stroke-width="1.1"/><path d="M1195.9 240.6 L1209.4 260.5" stroke="#1d4468" stroke-width="1.9"/><path d="M1176.8 272.5 L1209.4 260.5" stroke="#1d4468" stroke-width="1.9"/><path d="M1178.4 244.9 L1172.1 255.5" stroke="#1d4468" stroke-width="1"/><path d="M1181.5 252.7 L1174.4 264.0" stroke="#1d4468" stroke-width="1"/><path d="M1184.6 260.6 L1176.8 272.5" stroke="#1d4468" stroke-width="1"/><path d="M1187.2 242.7 L1181.5 252.7" stroke="#1d4468" stroke-width="1"/><path d="M1191.0 250.0 L1184.6 260.6" stroke="#1d4468" stroke-width="1"/><path d="M1194.7 257.2 L1187.7 268.5" stroke="#1d4468" stroke-width="1"/><path d="M1195.9 240.6 L1191.0 250.0" stroke="#1d4468" stroke-width="1"/><path d="M1200.4 247.2 L1194.7 257.2" stroke="#1d4468" stroke-width="1"/><path d="M1204.9 253.9 L1198.5 264.5" stroke="#1d4468" stroke-width="1"/>
<polygon points="1217.7,247.0 1243.9,240.6 1257.4,260.5 1224.8,272.5" fill="#cfe6f7"/><polygon points="1232.8,251.7 1248.4,247.2 1257.4,260.5 1239.5,267.1" fill="#35b4ea"/><path d="M1217.7 247.0 L1224.8 272.5" stroke="#1d4468" stroke-width="1.9"/><path d="M1217.7 247.0 L1243.9 240.6" stroke="#1d4468" stroke-width="1.9"/><path d="M1226.4 244.9 L1235.7 268.5" stroke="#1d4468" stroke-width="1.1"/><path d="M1220.1 255.5 L1248.4 247.2" stroke="#1d4468" stroke-width="1.1"/><path d="M1235.2 242.7 L1246.5 264.5" stroke="#1d4468" stroke-width="1.1"/><path d="M1222.4 264.0 L1252.9 253.9" stroke="#1d4468" stroke-width="1.1"/><path d="M1243.9 240.6 L1257.4 260.5" stroke="#1d4468" stroke-width="1.9"/><path d="M1224.8 272.5 L1257.4 260.5" stroke="#1d4468" stroke-width="1.9"/><path d="M1226.4 244.9 L1220.1 255.5" stroke="#1d4468" stroke-width="1"/><path d="M1229.5 252.7 L1222.4 264.0" stroke="#1d4468" stroke-width="1"/><path d="M1232.6 260.6 L1224.8 272.5" stroke="#1d4468" stroke-width="1"/><path d="M1235.2 242.7 L1229.5 252.7" stroke="#1d4468" stroke-width="1"/><path d="M1239.0 250.0 L1232.6 260.6" stroke="#1d4468" stroke-width="1"/><path d="M1242.7 257.2 L1235.7 268.5" stroke="#1d4468" stroke-width="1"/><path d="M1243.9 240.6 L1239.0 250.0" stroke="#1d4468" stroke-width="1"/><path d="M1248.4 247.2 L1242.7 257.2" stroke="#1d4468" stroke-width="1"/><path d="M1252.9 253.9 L1246.5 264.5" stroke="#1d4468" stroke-width="1"/>
<path d="M1267.4 244.2 L1275.2 265.4 L1303.6 256.2 L1304.4 264.8 L1276.6 275.6 L1268.4 255 Z" fill="#e8f3fb" stroke="#1e9ad6" stroke-width="1.8" stroke-linejoin="round"/>
<polygon points="1267.4,244.2 1290.8,237.8 1303.6,256.2 1275.2,265.4" fill="#cfe6f7"/><path d="M1267.4 244.2 L1275.2 265.4" stroke="#1d4468" stroke-width="1.9"/><path d="M1267.4 244.2 L1290.8 237.8" stroke="#1d4468" stroke-width="1.9"/><path d="M1275.2 242.1 L1284.7 262.3" stroke="#1d4468" stroke-width="1.1"/><path d="M1270.0 251.3 L1295.1 243.9" stroke="#1d4468" stroke-width="1.1"/><path d="M1283.0 239.9 L1294.1 259.3" stroke="#1d4468" stroke-width="1.1"/><path d="M1272.6 258.3 L1299.3 250.1" stroke="#1d4468" stroke-width="1.1"/><path d="M1290.8 237.8 L1303.6 256.2" stroke="#1d4468" stroke-width="1.9"/><path d="M1275.2 265.4 L1303.6 256.2" stroke="#1d4468" stroke-width="1.9"/><path d="M1275.2 242.1 L1270.0 251.3" stroke="#1d4468" stroke-width="1"/><path d="M1278.4 248.8 L1272.6 258.3" stroke="#1d4468" stroke-width="1"/><path d="M1281.5 255.6 L1275.2 265.4" stroke="#1d4468" stroke-width="1"/><path d="M1283.0 239.9 L1278.4 248.8" stroke="#1d4468" stroke-width="1"/><path d="M1286.7 246.4 L1281.5 255.6" stroke="#1d4468" stroke-width="1"/><path d="M1290.4 252.8 L1284.7 262.3" stroke="#1d4468" stroke-width="1"/><path d="M1290.8 237.8 L1286.7 246.4" stroke="#1d4468" stroke-width="1"/><path d="M1295.1 243.9 L1290.4 252.8" stroke="#1d4468" stroke-width="1"/><path d="M1299.3 250.1 L1294.1 259.3" stroke="#1d4468" stroke-width="1"/>
</svg>
<div class="a" style="left:0;top:1082px;width:1920px;height:42px;background:#f2f3f8"></div>
<svg style="left:0;top:1084px" width="100" height="40" viewBox="0 1084 100 40">
    <circle cx="23.8" cy="1106" r="9.8" fill="#fafafc" stroke="#a9aab2" stroke-width="1.5"/>
    <path d="M23.8 1099.5 A4.2 4.2 0 0 1 28 1103.7 C28 1106.8 23.8 1112.5 23.8 1112.5 C23.8 1112.5 19.6 1106.8 19.6 1103.7 A4.2 4.2 0 0 1 23.8 1099.5 Z" fill="none" stroke="#a4a5ad" stroke-width="1.4"/><circle cx="23.8" cy="1103.7" r="1.4" fill="#a4a5ad"/>
    <circle cx="65.8" cy="1106" r="10" fill="#fff" stroke="#111" stroke-width="2"/>
    <circle cx="65.8" cy="1100.7" r="2.2" fill="#111"/><path d="M62 1104.2 H69.6 V1108.6 H68 V1112.6 H63.6 V1108.6 H62 Z" fill="#111"/>
    </svg>
<div class="a" style="left:95.5px;top:1089px;width:1.5px;height:35px;background:#dcdde4"></div>
<span class="t" style="left:107.00px;top:1097.07px;font-size:20px;line-height:20px;color:#4a4a4e;letter-spacing:0.203px;">Click to begin moving the pre-selected items. | Ctrl = Cycle Copy/Stamp/Move. | Alt = Toggle Autofold. | Arrow Keys = Toggle Lock Inference Direction.</span>
<div class="a" style="left:1512.5px;top:1089px;width:1.5px;height:35px;background:#dcdde4"></div>
<span class="t" style="left:1532.00px;top:1097.07px;font-size:20px;line-height:20px;color:#4a4a4e;letter-spacing:0.027px;">Distance</span>
<div class="a" style="left:1619px;top:1087px;width:299px;height:40px;background:#f4f5f9;border:1.5px solid #c9cad2;border-radius:3px;box-sizing:border-box"></div>
<div class="a" style="left:-12px;top:17.5px;width:460.5px;height:899.5px;background:#fff;border-radius:0 7px 5px 0;box-shadow:0 9px 14px -3px rgba(0,0,0,0.30),1px 2px 4px -1px rgba(0,0,0,0.10),0 0 0 1px rgba(125,125,130,0.5);overflow:hidden">
<div class="a" style="left:0;top:0;width:461.5px;height:42px;background:#f3f3f3"></div>
<div class="a" style="left:435.5px;top:42px;width:26px;height:858px;background:#f1f1f1"></div>
<div class="a" style="left:436.5px;top:68px;width:22.5px;height:574px;background:#c1c1c1"></div>
<svg style="left:441.5px;top:52.5px" width="13" height="7" viewBox="0 0 13 7"><path d="M0 7 L6.5 0 L13 7Z" fill="#a3a3a3"/></svg>
<svg style="left:441.5px;top:883.5px" width="13" height="7" viewBox="0 0 13 7"><path d="M0 0 L6.5 7 L13 0Z" fill="#505050"/></svg>
<div class="a" style="left:430px;top:8.5px;width:29.8px;height:30px;background:#cf4a4b"></div>
<svg style="left:440.5px;top:19.5px" width="9" height="9" viewBox="0 0 9 9" stroke="#fff" stroke-width="1.9" fill="none"><path d="M0.7 0.7 L8.3 8.3 M8.3 0.7 L0.7 8.3"/></svg>
</div>
<span class="t" style="left:8.50px;top:30.51px;font-size:18.3px;line-height:18.3px;color:#1a1a1a;letter-spacing:-0.226px;">Configure Live Component</span>
<div class="a" style="left:10.5px;top:82.5px;width:47.5px;height:27px;border-radius:14px;background:#a9aab2"></div><div class="a" style="left:13.5px;top:85.5px;width:21px;height:21px;border-radius:11px;background:#fff"></div>
<span class="t" style="left:71.00px;top:85.75px;font-size:19.2px;line-height:19.2px;color:#8b8b8f;letter-spacing:0.135px;">Show units as authored</span>
<span class="t" style="left:18.50px;top:131.25px;font-size:19.2px;line-height:19.2px;color:#8b8b8f;letter-spacing:-0.094px;">Length (m)</span>
<span class="t" style="left:379.70px;top:131.25px;font-size:19.2px;line-height:19.2px;color:#4a4a4e;letter-spacing:-1.095px;">4.5</span>
<div class="a" style="left:18px;top:162.5px;width:385px;height:11px;border-radius:6px;background:#e2edf7"></div><div class="a" style="left:158px;top:156px;width:24px;height:24px;border-radius:12px;background:#fff;border:3.2px solid #176fad;box-sizing:border-box"></div>
<span class="t" style="left:18.50px;top:194.75px;font-size:19.2px;line-height:19.2px;color:#8b8b8f;letter-spacing:-0.013px;">Height (m)</span>
<span class="t" style="left:369.20px;top:194.75px;font-size:19.2px;line-height:19.2px;color:#4a4a4e;letter-spacing:-0.790px;">2.75</span>
<div class="a" style="left:18px;top:226.5px;width:385px;height:11px;border-radius:6px;background:#e2edf7"></div><div class="a" style="left:228.5px;top:220px;width:24px;height:24px;border-radius:12px;background:#fff;border:3.2px solid #176fad;box-sizing:border-box"></div>
<div class="a" style="left:18px;top:258px;width:47.5px;height:27px;border-radius:14px;background:#a9aab2"></div><div class="a" style="left:21px;top:261px;width:21px;height:21px;border-radius:11px;background:#fff"></div>
<span class="t" style="left:78.75px;top:261.25px;font-size:19.2px;line-height:19.2px;color:#8b8b8f;letter-spacing:0.133px;">Flat / sloped top</span>
<span class="t" style="left:18.50px;top:303.25px;font-size:19.2px;line-height:19.2px;color:#8b8b8f;letter-spacing:-0.175px;">Stud spacing (m)</span>
<span class="t" style="left:379.70px;top:303.25px;font-size:19.2px;line-height:19.2px;color:#4a4a4e;letter-spacing:-1.095px;">0.4</span>
<div class="a" style="left:18px;top:335.5px;width:385px;height:11px;border-radius:6px;background:#e2edf7"></div><div class="a" style="left:153.5px;top:329px;width:24px;height:24px;border-radius:12px;background:#fff;border:3.2px solid #176fad;box-sizing:border-box"></div>
<span class="t" style="left:18.50px;top:367.50px;font-size:19.2px;line-height:19.2px;color:#8b8b8f;letter-spacing:-0.175px;">Rows of noggings</span>
<span class="t" style="left:393.52px;top:367.50px;font-size:19.2px;line-height:19.2px;color:#4a4a4e;letter-spacing:0.000px;">1</span>
<div class="a" style="left:18px;top:399.5px;width:385px;height:11px;border-radius:6px;background:#e2edf7"></div><div class="a" style="left:138.75px;top:393px;width:24px;height:24px;border-radius:12px;background:#fff;border:3.2px solid #176fad;box-sizing:border-box"></div>
<div class="a" style="left:18px;top:431px;width:47.5px;height:27px;border-radius:14px;background:#1377c6"></div><div class="a" style="left:41.5px;top:434px;width:21px;height:21px;border-radius:11px;background:#fff"></div>
<span class="t" style="left:78.75px;top:434.25px;font-size:19.2px;line-height:19.2px;color:#8b8b8f;letter-spacing:-0.010px;">Offset noggings</span>
<span class="t" style="left:18.50px;top:477.25px;font-size:19.2px;line-height:19.2px;color:#8b8b8f;letter-spacing:0.200px;">Depth config</span>
<span class="t" style="left:18.50px;top:505.75px;font-size:19.2px;line-height:19.2px;color:#2b2b2e;letter-spacing:-0.501px;">Standard sizes</span>
<svg style="left:371px;top:509px" width="18" height="12" viewBox="0 0 18 12" fill="none" stroke="#6b6b70" stroke-width="1.8" stroke-linecap="round" stroke-linejoin="round"><path d="M1.5 2 L9 9.5 L16.5 2"/></svg>
<span class="t" style="left:18.50px;top:545.05px;font-size:19.2px;line-height:19.2px;color:#8b8b8f;letter-spacing:0.133px;">Dimensions</span>
<span class="t" style="left:18.50px;top:574.75px;font-size:19.2px;line-height:19.2px;color:#2b2b2e;letter-spacing:-0.698px;">51x152</span>
<svg style="left:371px;top:578px" width="18" height="12" viewBox="0 0 18 12" fill="none" stroke="#6b6b70" stroke-width="1.8" stroke-linecap="round" stroke-linejoin="round"><path d="M1.5 2 L9 9.5 L16.5 2"/></svg>
<span class="t" style="left:18.50px;top:613.25px;font-size:19.2px;line-height:19.2px;color:#8b8b8f;letter-spacing:0.079px;">Header height (m)</span>
<span class="t" style="left:369.20px;top:613.25px;font-size:19.2px;line-height:19.2px;color:#4a4a4e;letter-spacing:-0.790px;">0.14</span>
<div class="a" style="left:18px;top:645.5px;width:385px;height:11px;border-radius:6px;background:#e2edf7"></div><div class="a" style="left:117.5px;top:639px;width:24px;height:24px;border-radius:12px;background:#fff;border:3.2px solid #176fad;box-sizing:border-box"></div>
<div class="a" style="left:18px;top:677.5px;width:47.5px;height:27px;border-radius:14px;background:#1377c6"></div><div class="a" style="left:41.5px;top:680.5px;width:21px;height:21px;border-radius:11px;background:#fff"></div>
<span class="t" style="left:78.75px;top:680.25px;font-size:19.2px;line-height:19.2px;color:#8b8b8f;letter-spacing:0.247px;">Door opening</span>
<div class="a" style="left:18px;top:722.5px;width:47.5px;height:27px;border-radius:14px;background:#a9aab2"></div><div class="a" style="left:21px;top:725.5px;width:21px;height:21px;border-radius:11px;background:#fff"></div>
<span class="t" style="left:78.75px;top:725.25px;font-size:19.2px;line-height:19.2px;color:#8b8b8f;letter-spacing:0.366px;">Cut through bottom log</span>
<span class="t" style="left:18.50px;top:767.50px;font-size:19.2px;line-height:19.2px;color:#8b8b8f;letter-spacing:0.278px;">Door width (m)</span>
<span class="t" style="left:379.70px;top:767.50px;font-size:19.2px;line-height:19.2px;color:#4a4a4e;letter-spacing:-1.095px;">0.9</span>
<div class="a" style="left:18px;top:799.5px;width:385px;height:11px;border-radius:6px;background:#e2edf7"></div><div class="a" style="left:116px;top:793px;width:24px;height:24px;border-radius:12px;background:#fff;border:3.2px solid #176fad;box-sizing:border-box"></div>
<span class="t" style="left:18.50px;top:831.25px;font-size:19.2px;line-height:19.2px;color:#8b8b8f;letter-spacing:0.116px;">Door height (m)</span>
<span class="t" style="left:377.51px;top:831.25px;font-size:19.2px;line-height:19.2px;color:#4a4a4e;letter-spacing:0.000px;">2.1</span>
<div class="a" style="left:18px;top:863.25px;width:385px;height:11px;border-radius:6px;background:#e2edf7"></div><div class="a" style="left:308.75px;top:856.75px;width:24px;height:24px;border-radius:12px;background:#fff;border:3.2px solid #176fad;box-sizing:border-box"></div>
<div class="a" style="left:0;top:880px;width:423px;height:36px;overflow:hidden">
<span class="t" style="left:18.50px;top:14.75px;font-size:19.2px;line-height:19.2px;color:#8b8b8f;letter-spacing:0.234px;">Door position (m)</span>
<span class="t" style="left:376.81px;top:14.75px;font-size:19.2px;line-height:19.2px;color:#4a4a4e;letter-spacing:0.000px;">1.1</span>
</div>
</div>
</body></html>
